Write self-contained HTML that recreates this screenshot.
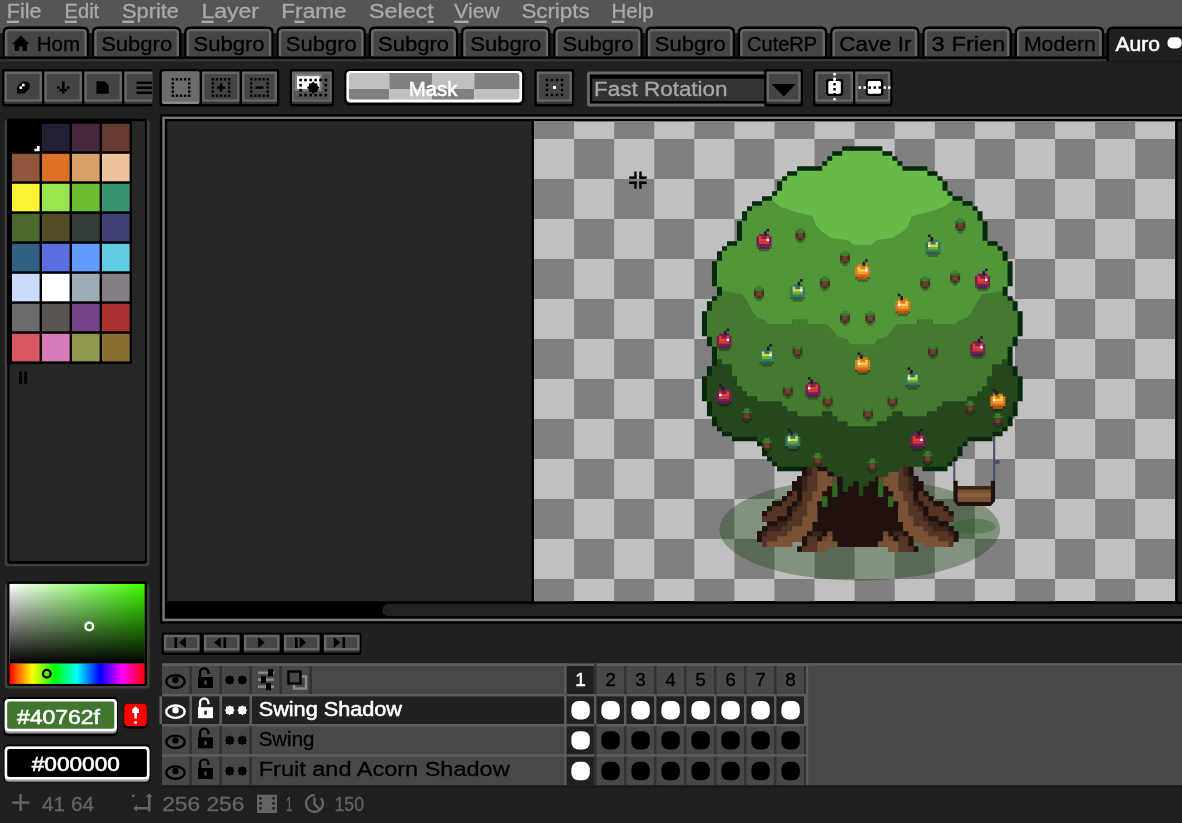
<!DOCTYPE html>
<html lang="en"><head><meta charset="utf-8"><title>Aseprite</title>
<style>
html,body{margin:0;padding:0;background:#202020;overflow:hidden;}
body{position:relative;width:1182px;height:823px;font-family:"Liberation Sans",sans-serif;}
svg{display:block;position:absolute;left:-4px;top:-4px;filter:blur(0.5px);}
svg text{font-family:"Liberation Sans",sans-serif;stroke-linejoin:round;}
</style></head><body>
<svg width="1190" height="831" viewBox="-4 -4 1190 831" font-family="'Liberation Sans', sans-serif">
<rect x="-4" y="-4" width="1190" height="831" fill="#202020"/>
<rect x="-4" y="-4" width="1190" height="37" fill="#555555"/>
<text x="6.8" y="18" font-size="19.5" fill="#aaaaaa" stroke="#aaaaaa" stroke-width="0.3" textLength="34.7" lengthAdjust="spacingAndGlyphs">File</text>
<rect x="7" y="20.6" width="12" height="2.4" fill="#aaaaaa"/>
<text x="64.5" y="18" font-size="19.5" fill="#aaaaaa" stroke="#aaaaaa" stroke-width="0.3" textLength="34.7" lengthAdjust="spacingAndGlyphs">Edit</text>
<rect x="64.8" y="20.6" width="12" height="2.4" fill="#aaaaaa"/>
<text x="122" y="18" font-size="19.5" fill="#aaaaaa" stroke="#aaaaaa" stroke-width="0.3" textLength="57" lengthAdjust="spacingAndGlyphs">Sprite</text>
<rect x="122.2" y="20.6" width="12" height="2.4" fill="#aaaaaa"/>
<text x="201.4" y="18" font-size="19.5" fill="#aaaaaa" stroke="#aaaaaa" stroke-width="0.3" textLength="57.6" lengthAdjust="spacingAndGlyphs">Layer</text>
<rect x="201.4" y="20.6" width="12.4" height="2.4" fill="#aaaaaa"/>
<text x="281.3" y="18" font-size="19.5" fill="#aaaaaa" stroke="#aaaaaa" stroke-width="0.3" textLength="65.3" lengthAdjust="spacingAndGlyphs">Frame</text>
<rect x="294.5" y="20.6" width="9.9" height="2.4" fill="#aaaaaa"/>
<text x="369" y="18" font-size="19.5" fill="#aaaaaa" stroke="#aaaaaa" stroke-width="0.3" textLength="64.7" lengthAdjust="spacingAndGlyphs">Select</text>
<rect x="427.6" y="20.6" width="6.1" height="2.4" fill="#aaaaaa"/>
<text x="454.3" y="18" font-size="19.5" fill="#aaaaaa" stroke="#aaaaaa" stroke-width="0.3" textLength="45.3" lengthAdjust="spacingAndGlyphs">View</text>
<rect x="454.3" y="20.6" width="14.3" height="2.4" fill="#aaaaaa"/>
<text x="521.4" y="18" font-size="19.5" fill="#aaaaaa" stroke="#aaaaaa" stroke-width="0.3" textLength="68.2" lengthAdjust="spacingAndGlyphs">Scripts</text>
<rect x="534.6" y="20.6" width="12.1" height="2.4" fill="#aaaaaa"/>
<text x="611.6" y="18" font-size="19.5" fill="#aaaaaa" stroke="#aaaaaa" stroke-width="0.3" textLength="42" lengthAdjust="spacingAndGlyphs">Help</text>
<rect x="611.6" y="20.6" width="12.7" height="2.4" fill="#aaaaaa"/>
<rect x="-4" y="33.5" width="1114" height="25.5" fill="#1a1a1a"/>
<path d="M2.5 58.8 L2.5 32.6 Q2.5 26.6 8.5 26.6 L83.1 26.6 Q89.1 26.6 89.1 32.6 L89.1 58.8 Z" fill="#000"/>
<path d="M4.8 56.5 L4.8 32.9 Q4.8 28.9 8.8 28.9 L82.8 28.9 Q86.8 28.9 86.8 32.9 L86.8 56.5 Z" fill="#686868"/>
<path d="M7.3 56.5 L7.3 33.7 Q7.3 31.2 9.8 31.2 L81.8 31.2 Q84.3 31.2 84.3 33.7 L84.3 56.5 Z" fill="#454545"/>
<polygon points="20.8,35.5 29.5,44 27,44 27,51 22.6,51 22.6,46.5 19,46.5 19,51 14.6,51 14.6,44 12.2,44" fill="#000"/>
<text x="36.8" y="51" font-size="20" fill="#000" stroke="#000" stroke-width="0.3" textLength="43.2" lengthAdjust="spacingAndGlyphs">Hom</text>
<path d="M91.9 58.8 L91.9 32.6 Q91.9 26.6 97.9 26.6 L175.4 26.6 Q181.4 26.6 181.4 32.6 L181.4 58.8 Z" fill="#000"/>
<path d="M94.2 56.5 L94.2 32.9 Q94.2 28.9 98.2 28.9 L175.1 28.9 Q179.1 28.9 179.1 32.9 L179.1 56.5 Z" fill="#686868"/>
<path d="M96.7 56.5 L96.7 33.7 Q96.7 31.2 99.2 31.2 L174.1 31.2 Q176.6 31.2 176.6 33.7 L176.6 56.5 Z" fill="#454545"/>
<text x="101.2" y="51" font-size="20" fill="#000" stroke="#000" stroke-width="0.3" textLength="71" lengthAdjust="spacingAndGlyphs">Subgro</text>
<path d="M184.17 58.8 L184.17 32.6 Q184.17 26.6 190.17 26.6 L267.67 26.6 Q273.67 26.6 273.67 32.6 L273.67 58.8 Z" fill="#000"/>
<path d="M186.47 56.5 L186.47 32.9 Q186.47 28.9 190.47 28.9 L267.37 28.9 Q271.37 28.9 271.37 32.9 L271.37 56.5 Z" fill="#686868"/>
<path d="M188.97 56.5 L188.97 33.7 Q188.97 31.2 191.47 31.2 L266.37 31.2 Q268.87 31.2 268.87 33.7 L268.87 56.5 Z" fill="#454545"/>
<text x="193.47" y="51" font-size="20" fill="#000" stroke="#000" stroke-width="0.3" textLength="71" lengthAdjust="spacingAndGlyphs">Subgro</text>
<path d="M276.44 58.8 L276.44 32.6 Q276.44 26.6 282.44 26.6 L359.94 26.6 Q365.94 26.6 365.94 32.6 L365.94 58.8 Z" fill="#000"/>
<path d="M278.74 56.5 L278.74 32.9 Q278.74 28.9 282.74 28.9 L359.64 28.9 Q363.64 28.9 363.64 32.9 L363.64 56.5 Z" fill="#686868"/>
<path d="M281.24 56.5 L281.24 33.7 Q281.24 31.2 283.74 31.2 L358.64 31.2 Q361.14 31.2 361.14 33.7 L361.14 56.5 Z" fill="#454545"/>
<text x="285.74" y="51" font-size="20" fill="#000" stroke="#000" stroke-width="0.3" textLength="71" lengthAdjust="spacingAndGlyphs">Subgro</text>
<path d="M368.71 58.8 L368.71 32.6 Q368.71 26.6 374.71 26.6 L452.21 26.6 Q458.21 26.6 458.21 32.6 L458.21 58.8 Z" fill="#000"/>
<path d="M371.01 56.5 L371.01 32.9 Q371.01 28.9 375.01 28.9 L451.91 28.9 Q455.91 28.9 455.91 32.9 L455.91 56.5 Z" fill="#686868"/>
<path d="M373.51 56.5 L373.51 33.7 Q373.51 31.2 376.01 31.2 L450.91 31.2 Q453.41 31.2 453.41 33.7 L453.41 56.5 Z" fill="#454545"/>
<text x="378.01" y="51" font-size="20" fill="#000" stroke="#000" stroke-width="0.3" textLength="71" lengthAdjust="spacingAndGlyphs">Subgro</text>
<path d="M460.98 58.8 L460.98 32.6 Q460.98 26.6 466.98 26.6 L544.48 26.6 Q550.48 26.6 550.48 32.6 L550.48 58.8 Z" fill="#000"/>
<path d="M463.28 56.5 L463.28 32.9 Q463.28 28.9 467.28 28.9 L544.18 28.9 Q548.18 28.9 548.18 32.9 L548.18 56.5 Z" fill="#686868"/>
<path d="M465.78 56.5 L465.78 33.7 Q465.78 31.2 468.28 31.2 L543.18 31.2 Q545.68 31.2 545.68 33.7 L545.68 56.5 Z" fill="#454545"/>
<text x="470.28" y="51" font-size="20" fill="#000" stroke="#000" stroke-width="0.3" textLength="71" lengthAdjust="spacingAndGlyphs">Subgro</text>
<path d="M553.25 58.8 L553.25 32.6 Q553.25 26.6 559.25 26.6 L636.75 26.6 Q642.75 26.6 642.75 32.6 L642.75 58.8 Z" fill="#000"/>
<path d="M555.55 56.5 L555.55 32.9 Q555.55 28.9 559.55 28.9 L636.45 28.9 Q640.45 28.9 640.45 32.9 L640.45 56.5 Z" fill="#686868"/>
<path d="M558.05 56.5 L558.05 33.7 Q558.05 31.2 560.55 31.2 L635.45 31.2 Q637.95 31.2 637.95 33.7 L637.95 56.5 Z" fill="#454545"/>
<text x="562.55" y="51" font-size="20" fill="#000" stroke="#000" stroke-width="0.3" textLength="71" lengthAdjust="spacingAndGlyphs">Subgro</text>
<path d="M645.52 58.8 L645.52 32.6 Q645.52 26.6 651.52 26.6 L729.02 26.6 Q735.02 26.6 735.02 32.6 L735.02 58.8 Z" fill="#000"/>
<path d="M647.82 56.5 L647.82 32.9 Q647.82 28.9 651.82 28.9 L728.72 28.9 Q732.72 28.9 732.72 32.9 L732.72 56.5 Z" fill="#686868"/>
<path d="M650.32 56.5 L650.32 33.7 Q650.32 31.2 652.82 31.2 L727.72 31.2 Q730.22 31.2 730.22 33.7 L730.22 56.5 Z" fill="#454545"/>
<text x="654.82" y="51" font-size="20" fill="#000" stroke="#000" stroke-width="0.3" textLength="71" lengthAdjust="spacingAndGlyphs">Subgro</text>
<path d="M737.79 58.8 L737.79 32.6 Q737.79 26.6 743.79 26.6 L821.29 26.6 Q827.29 26.6 827.29 32.6 L827.29 58.8 Z" fill="#000"/>
<path d="M740.09 56.5 L740.09 32.9 Q740.09 28.9 744.09 28.9 L820.99 28.9 Q824.99 28.9 824.99 32.9 L824.99 56.5 Z" fill="#686868"/>
<path d="M742.59 56.5 L742.59 33.7 Q742.59 31.2 745.09 31.2 L819.99 31.2 Q822.49 31.2 822.49 33.7 L822.49 56.5 Z" fill="#454545"/>
<text x="747.09" y="51" font-size="20" fill="#000" stroke="#000" stroke-width="0.3" textLength="70" lengthAdjust="spacingAndGlyphs">CuteRP</text>
<path d="M830.06 58.8 L830.06 32.6 Q830.06 26.6 836.06 26.6 L913.56 26.6 Q919.56 26.6 919.56 32.6 L919.56 58.8 Z" fill="#000"/>
<path d="M832.36 56.5 L832.36 32.9 Q832.36 28.9 836.36 28.9 L913.26 28.9 Q917.26 28.9 917.26 32.9 L917.26 56.5 Z" fill="#686868"/>
<path d="M834.86 56.5 L834.86 33.7 Q834.86 31.2 837.36 31.2 L912.26 31.2 Q914.76 31.2 914.76 33.7 L914.76 56.5 Z" fill="#454545"/>
<text x="839.36" y="51" font-size="20" fill="#000" stroke="#000" stroke-width="0.3" textLength="72" lengthAdjust="spacingAndGlyphs">Cave Ir</text>
<path d="M922.33 58.8 L922.33 32.6 Q922.33 26.6 928.33 26.6 L1005.83 26.6 Q1011.83 26.6 1011.83 32.6 L1011.83 58.8 Z" fill="#000"/>
<path d="M924.63 56.5 L924.63 32.9 Q924.63 28.9 928.63 28.9 L1005.53 28.9 Q1009.53 28.9 1009.53 32.9 L1009.53 56.5 Z" fill="#686868"/>
<path d="M927.13 56.5 L927.13 33.7 Q927.13 31.2 929.63 31.2 L1004.53 31.2 Q1007.03 31.2 1007.03 33.7 L1007.03 56.5 Z" fill="#454545"/>
<text x="931.63" y="51" font-size="20" fill="#000" stroke="#000" stroke-width="0.3" textLength="73.8" lengthAdjust="spacingAndGlyphs">3 Frien</text>
<path d="M1014.6 58.8 L1014.6 32.6 Q1014.6 26.6 1020.6 26.6 L1098.1 26.6 Q1104.1 26.6 1104.1 32.6 L1104.1 58.8 Z" fill="#000"/>
<path d="M1016.9 56.5 L1016.9 32.9 Q1016.9 28.9 1020.9 28.9 L1097.8 28.9 Q1101.8 28.9 1101.8 32.9 L1101.8 56.5 Z" fill="#686868"/>
<path d="M1019.4 56.5 L1019.4 33.7 Q1019.4 31.2 1021.9 31.2 L1096.8 31.2 Q1099.3 31.2 1099.3 33.7 L1099.3 56.5 Z" fill="#454545"/>
<text x="1023.9" y="51" font-size="20" fill="#000" stroke="#000" stroke-width="0.3" textLength="72" lengthAdjust="spacingAndGlyphs">Modern</text>
<rect x="-4" y="56.5" width="1111.5" height="2.5" fill="#000"/>
<rect x="-4" y="59" width="1111.5" height="2.4" fill="#343434"/>
<path d="M1106.6 61.5 L1106.6 33 Q1106.6 26.6 1113 26.6 L1190 26.6 L1190 61.5 Z" fill="#000"/>
<path d="M1109 61.5 L1109 33.5 Q1109 29 1114 29 L1190 29 L1190 61.5 Z" fill="#202020"/>
<text x="1115.5" y="51" font-size="20" fill="#fff" stroke="#fff" stroke-width="0.55" textLength="44.5" lengthAdjust="spacingAndGlyphs">Auro</text>
<rect x="1167.5" y="37.3" width="14.2" height="11.2" fill="#fff" rx="5"/>
<rect x="2.1" y="69.2" width="42.3" height="37.2" fill="#000" rx="2"/>
<rect x="4.5" y="71.6" width="37.5" height="32.4" fill="#343434"/>
<rect x="4.5" y="71.6" width="37.5" height="30.1" fill="#686868"/>
<rect x="6.9" y="74.1" width="32.7" height="25.3" fill="#454545"/>
<rect x="42" y="69.2" width="42.4" height="37.2" fill="#000" rx="2"/>
<rect x="44.4" y="71.6" width="37.6" height="32.4" fill="#343434"/>
<rect x="44.4" y="71.6" width="37.6" height="30.1" fill="#686868"/>
<rect x="46.8" y="74.1" width="32.8" height="25.3" fill="#454545"/>
<rect x="82" y="69.2" width="42.4" height="37.2" fill="#000" rx="2"/>
<rect x="84.4" y="71.6" width="37.6" height="32.4" fill="#343434"/>
<rect x="84.4" y="71.6" width="37.6" height="30.1" fill="#686868"/>
<rect x="86.8" y="74.1" width="32.8" height="25.3" fill="#454545"/>
<rect x="122" y="69.2" width="30.3" height="37.2" fill="#000" rx="2"/>
<rect x="124.4" y="71.6" width="27.9" height="32.4" fill="#343434"/>
<rect x="124.4" y="71.6" width="27.9" height="30.1" fill="#686868"/>
<rect x="126.8" y="74.1" width="25.5" height="25.3" fill="#454545"/>
<polygon points="22,81.5 27,81.5 29.6,84 29.6,88.5 24.5,93.5 17,93.5 17,87" fill="#000"/>
<rect x="19.5" y="86.3" width="2.6" height="2.6" fill="#fff"/>
<rect x="22" y="83.8" width="2.6" height="2.6" fill="#fff"/>
<rect x="62" y="81.5" width="2.6" height="12" fill="#000"/>
<rect x="59.5" y="88.8" width="7.6" height="2.5" fill="#000"/>
<rect x="57" y="86.3" width="2.5" height="2.5" fill="#000"/>
<rect x="67" y="86.3" width="2.5" height="2.5" fill="#000"/>
<polygon points="96.5,81.3 104.5,81.3 108.8,85.5 108.8,93.8 96.5,93.8" fill="#000"/>
<rect x="136.5" y="81.5" width="15.5" height="2.5" fill="#000"/>
<rect x="136.5" y="86.5" width="15.5" height="2.5" fill="#000"/>
<rect x="136.5" y="91.5" width="15.5" height="2.5" fill="#000"/>
<rect x="159.5" y="69.2" width="42.6" height="37.2" fill="#000" rx="2"/>
<rect x="161.9" y="71.6" width="37.8" height="32.4" fill="#8a8a8a" rx="2"/>
<rect x="161.9" y="71.6" width="37.8" height="30" fill="#6c6c6c" rx="2"/>
<rect x="199.7" y="69.2" width="42.4" height="37.2" fill="#000" rx="2"/>
<rect x="202.1" y="71.6" width="37.6" height="32.4" fill="#343434"/>
<rect x="202.1" y="71.6" width="37.6" height="30.1" fill="#686868"/>
<rect x="204.5" y="74.1" width="32.8" height="25.3" fill="#454545"/>
<rect x="239.7" y="69.2" width="39.6" height="37.2" fill="#000" rx="2"/>
<rect x="242.1" y="71.6" width="34.8" height="32.4" fill="#343434"/>
<rect x="242.1" y="71.6" width="34.8" height="30.1" fill="#686868"/>
<rect x="244.5" y="74.1" width="30" height="25.3" fill="#454545"/>
<rect x="171.6" y="78.1" width="2.4" height="2.4" fill="#000"/>
<rect x="171.6" y="82.2" width="2.4" height="2.4" fill="#000"/>
<rect x="171.6" y="86.3" width="2.4" height="2.4" fill="#000"/>
<rect x="171.6" y="90.4" width="2.4" height="2.4" fill="#000"/>
<rect x="171.6" y="94.5" width="2.4" height="2.4" fill="#000"/>
<rect x="175.7" y="78.1" width="2.4" height="2.4" fill="#000"/>
<rect x="175.7" y="94.5" width="2.4" height="2.4" fill="#000"/>
<rect x="179.8" y="78.1" width="2.4" height="2.4" fill="#000"/>
<rect x="179.8" y="94.5" width="2.4" height="2.4" fill="#000"/>
<rect x="183.9" y="78.1" width="2.4" height="2.4" fill="#000"/>
<rect x="183.9" y="94.5" width="2.4" height="2.4" fill="#000"/>
<rect x="188" y="78.1" width="2.4" height="2.4" fill="#000"/>
<rect x="188" y="82.2" width="2.4" height="2.4" fill="#000"/>
<rect x="188" y="86.3" width="2.4" height="2.4" fill="#000"/>
<rect x="188" y="90.4" width="2.4" height="2.4" fill="#000"/>
<rect x="188" y="94.5" width="2.4" height="2.4" fill="#000"/>
<rect x="211.6" y="78.1" width="2.4" height="2.4" fill="#000"/>
<rect x="211.6" y="82.2" width="2.4" height="2.4" fill="#000"/>
<rect x="211.6" y="86.3" width="2.4" height="2.4" fill="#000"/>
<rect x="211.6" y="90.4" width="2.4" height="2.4" fill="#000"/>
<rect x="211.6" y="94.5" width="2.4" height="2.4" fill="#000"/>
<rect x="215.7" y="78.1" width="2.4" height="2.4" fill="#000"/>
<rect x="215.7" y="94.5" width="2.4" height="2.4" fill="#000"/>
<rect x="219.8" y="78.1" width="2.4" height="2.4" fill="#000"/>
<rect x="219.8" y="94.5" width="2.4" height="2.4" fill="#000"/>
<rect x="223.9" y="78.1" width="2.4" height="2.4" fill="#000"/>
<rect x="223.9" y="94.5" width="2.4" height="2.4" fill="#000"/>
<rect x="228" y="78.1" width="2.4" height="2.4" fill="#000"/>
<rect x="228" y="82.2" width="2.4" height="2.4" fill="#000"/>
<rect x="228" y="86.3" width="2.4" height="2.4" fill="#000"/>
<rect x="228" y="90.4" width="2.4" height="2.4" fill="#000"/>
<rect x="228" y="94.5" width="2.4" height="2.4" fill="#000"/>
<rect x="217" y="86.3" width="8" height="2.5" fill="#000"/>
<rect x="219.8" y="83.5" width="2.5" height="8" fill="#000"/>
<rect x="250.1" y="78.1" width="2.4" height="2.4" fill="#000"/>
<rect x="250.1" y="82.2" width="2.4" height="2.4" fill="#000"/>
<rect x="250.1" y="86.3" width="2.4" height="2.4" fill="#000"/>
<rect x="250.1" y="90.4" width="2.4" height="2.4" fill="#000"/>
<rect x="250.1" y="94.5" width="2.4" height="2.4" fill="#000"/>
<rect x="254.2" y="78.1" width="2.4" height="2.4" fill="#000"/>
<rect x="254.2" y="94.5" width="2.4" height="2.4" fill="#000"/>
<rect x="258.3" y="78.1" width="2.4" height="2.4" fill="#000"/>
<rect x="258.3" y="94.5" width="2.4" height="2.4" fill="#000"/>
<rect x="262.4" y="78.1" width="2.4" height="2.4" fill="#000"/>
<rect x="262.4" y="94.5" width="2.4" height="2.4" fill="#000"/>
<rect x="266.5" y="78.1" width="2.4" height="2.4" fill="#000"/>
<rect x="266.5" y="82.2" width="2.4" height="2.4" fill="#000"/>
<rect x="266.5" y="86.3" width="2.4" height="2.4" fill="#000"/>
<rect x="266.5" y="90.4" width="2.4" height="2.4" fill="#000"/>
<rect x="266.5" y="94.5" width="2.4" height="2.4" fill="#000"/>
<rect x="255.5" y="86.3" width="8" height="2.5" fill="#000"/>
<rect x="289.6" y="69.2" width="44.5" height="37.2" fill="#000" rx="2"/>
<rect x="292" y="71.6" width="39.7" height="32.4" fill="#343434"/>
<rect x="292" y="71.6" width="39.7" height="30.1" fill="#686868"/>
<rect x="294.4" y="74.1" width="34.9" height="25.3" fill="#454545"/>
<rect x="294.6" y="74" width="27.6" height="17.3" fill="#7c7c7c"/>
<rect x="322.2" y="74" width="7.2" height="25.3" fill="#565656"/>
<rect x="294.6" y="91.3" width="27.6" height="8" fill="#565656"/>
<rect x="297" y="76.2" width="22.5" height="12.8" fill="#fff"/>
<rect x="299.3" y="78.7" width="2.6" height="2.6" fill="#000"/>
<rect x="299.3" y="93.8" width="2.6" height="2.6" fill="#000"/>
<rect x="304.2" y="78.7" width="2.6" height="2.6" fill="#000"/>
<rect x="304.2" y="93.8" width="2.6" height="2.6" fill="#000"/>
<rect x="309.4" y="78.7" width="2.6" height="2.6" fill="#000"/>
<rect x="309.4" y="93.8" width="2.6" height="2.6" fill="#000"/>
<rect x="314.3" y="78.7" width="2.6" height="2.6" fill="#000"/>
<rect x="314.3" y="93.8" width="2.6" height="2.6" fill="#000"/>
<rect x="319.3" y="78.7" width="2.6" height="2.6" fill="#000"/>
<rect x="319.3" y="93.8" width="2.6" height="2.6" fill="#000"/>
<rect x="324.5" y="78.7" width="2.6" height="2.6" fill="#000"/>
<rect x="324.5" y="93.8" width="2.6" height="2.6" fill="#000"/>
<rect x="299.3" y="83.9" width="2.6" height="2.6" fill="#000"/>
<rect x="324.5" y="83.9" width="2.6" height="2.6" fill="#000"/>
<rect x="299.3" y="88.9" width="2.6" height="2.6" fill="#000"/>
<rect x="324.5" y="88.9" width="2.6" height="2.6" fill="#000"/>
<polygon points="313.2,81.5 316,84.5 319.5,87.7 316,91 313.2,94 310.4,91 306.9,87.7 310.4,84.5" fill="#000"/>
<rect x="309" y="83.5" width="8.4" height="8.4" fill="#000"/>
<rect x="344.3" y="69" width="180.2" height="36.5" fill="#000" rx="5"/>
<rect x="346.4" y="71" width="175.7" height="31.4" fill="#fff" rx="4"/>
<clipPath id="mk"><rect x="349" y="73" width="170.4" height="26.6" rx="2.5"/></clipPath><g clip-path="url(#mk)">
<rect x="346" y="73" width="43.3" height="16" fill="#c0c0c0"/>
<rect x="346" y="89" width="43.3" height="11" fill="#808080"/>
<rect x="389.3" y="73" width="42.7" height="16" fill="#808080"/>
<rect x="389.3" y="89" width="42.7" height="11" fill="#c0c0c0"/>
<rect x="432" y="73" width="42.3" height="16" fill="#c0c0c0"/>
<rect x="432" y="89" width="42.3" height="11" fill="#808080"/>
<rect x="474.3" y="73" width="47.7" height="16" fill="#808080"/>
<rect x="474.3" y="89" width="47.7" height="11" fill="#c0c0c0"/>
</g>
<text x="408.7" y="95.8" font-size="20" fill="#fff" stroke="#fff" stroke-width="0.55" textLength="48.7" lengthAdjust="spacingAndGlyphs">Mask</text>
<rect x="534.4" y="69.2" width="39.8" height="37.2" fill="#000" rx="2"/>
<rect x="536.8" y="71.6" width="35" height="32.4" fill="#343434"/>
<rect x="536.8" y="71.6" width="35" height="30.1" fill="#686868"/>
<rect x="539.2" y="74.1" width="30.2" height="25.3" fill="#454545"/>
<rect x="545.8" y="78.8" width="2.4" height="2.4" fill="#000"/>
<rect x="545.8" y="83.8" width="2.4" height="2.4" fill="#000"/>
<rect x="545.8" y="88.8" width="2.4" height="2.4" fill="#000"/>
<rect x="545.8" y="93.8" width="2.4" height="2.4" fill="#000"/>
<rect x="550.8" y="78.8" width="2.4" height="2.4" fill="#000"/>
<rect x="550.8" y="93.8" width="2.4" height="2.4" fill="#000"/>
<rect x="555.8" y="78.8" width="2.4" height="2.4" fill="#000"/>
<rect x="555.8" y="93.8" width="2.4" height="2.4" fill="#000"/>
<rect x="560.8" y="78.8" width="2.4" height="2.4" fill="#000"/>
<rect x="560.8" y="83.8" width="2.4" height="2.4" fill="#000"/>
<rect x="560.8" y="88.8" width="2.4" height="2.4" fill="#000"/>
<rect x="560.8" y="93.8" width="2.4" height="2.4" fill="#000"/>
<rect x="553" y="86" width="3" height="3" fill="#fff"/>
<rect x="586.9" y="71.5" width="179.1" height="34.9" fill="#686868" rx="3"/>
<rect x="589.9" y="74.4" width="176.1" height="29.2" fill="#000"/>
<rect x="592.2" y="78.6" width="173.8" height="22.5" fill="#343434"/>
<text x="594" y="96" font-size="20" fill="#a8a8a8" stroke="#a8a8a8" stroke-width="0.3" textLength="133.6" lengthAdjust="spacingAndGlyphs">Fast Rotation</text>
<rect x="764.2" y="69.2" width="38.8" height="37.2" fill="#000" rx="2"/>
<rect x="766.6" y="71.6" width="34" height="32.4" fill="#343434"/>
<rect x="766.6" y="71.6" width="34" height="30.1" fill="#686868"/>
<rect x="769" y="74.1" width="29.2" height="25.3" fill="#454545"/>
<polygon points="771.6,83.9 795.9,83.9 783.8,96.5" fill="#000"/>
<rect x="813" y="69.2" width="42.4" height="37.2" fill="#000" rx="2"/>
<rect x="815.4" y="71.6" width="37.6" height="32.4" fill="#343434"/>
<rect x="815.4" y="71.6" width="37.6" height="30.1" fill="#686868"/>
<rect x="817.8" y="74.1" width="32.8" height="25.3" fill="#454545"/>
<rect x="853" y="69.2" width="39.6" height="37.2" fill="#000" rx="2"/>
<rect x="855.4" y="71.6" width="34.8" height="32.4" fill="#343434"/>
<rect x="855.4" y="71.6" width="34.8" height="30.1" fill="#686868"/>
<rect x="857.8" y="74.1" width="30" height="25.3" fill="#454545"/>
<rect x="826" y="79" width="17.2" height="17" fill="#000" rx="3"/>
<rect x="828.3" y="81" width="12.5" height="12.7" fill="#fff" rx="1.5"/>
<rect x="833.3" y="73" width="2.5" height="2.5" fill="#fff"/>
<rect x="833.3" y="78" width="2.5" height="2.5" fill="#fff"/>
<rect x="833.3" y="83" width="2.5" height="2.5" fill="#000"/>
<rect x="833.3" y="88" width="2.5" height="2.5" fill="#000"/>
<rect x="833.3" y="93" width="2.5" height="2.5" fill="#000"/>
<rect x="833.3" y="98" width="2.5" height="2.5" fill="#fff"/>
<rect x="833.3" y="77.6" width="2.5" height="3" fill="#fff"/>
<rect x="865.5" y="79" width="17.8" height="17" fill="#000" rx="3"/>
<rect x="867.8" y="81" width="13.2" height="12.7" fill="#fff" rx="1.5"/>
<rect x="858.5" y="86.3" width="2.5" height="2.5" fill="#fff"/>
<rect x="863.5" y="86.3" width="2.5" height="2.5" fill="#fff"/>
<rect x="868.5" y="86.3" width="2.5" height="2.5" fill="#000"/>
<rect x="873.5" y="86.3" width="2.5" height="2.5" fill="#000"/>
<rect x="878.5" y="86.3" width="2.5" height="2.5" fill="#000"/>
<rect x="883.5" y="86.3" width="2.5" height="2.5" fill="#fff"/>
<rect x="888" y="86.3" width="2.5" height="2.5" fill="#fff"/>
<rect x="4.7" y="120" width="144.9" height="446.3" fill="#3e3e3e" rx="3"/>
<rect x="7.3" y="118.8" width="139.6" height="445" fill="#000" rx="2"/>
<rect x="9.6" y="121.3" width="135.2" height="439.7" fill="#262626"/>
<rect x="7.3" y="118.8" width="124.7" height="245.2" fill="#000"/>
<rect x="42" y="123.8" width="27.6" height="27.5" fill="#222034"/>
<rect x="72" y="123.8" width="27.6" height="27.5" fill="#45283c"/>
<rect x="102" y="123.8" width="27.6" height="27.5" fill="#663931"/>
<rect x="12" y="153.8" width="27.6" height="27.5" fill="#8f563b"/>
<rect x="42" y="153.8" width="27.6" height="27.5" fill="#df7126"/>
<rect x="72" y="153.8" width="27.6" height="27.5" fill="#d9a066"/>
<rect x="102" y="153.8" width="27.6" height="27.5" fill="#eec39a"/>
<rect x="12" y="183.8" width="27.6" height="27.5" fill="#fbf236"/>
<rect x="42" y="183.8" width="27.6" height="27.5" fill="#99e550"/>
<rect x="72" y="183.8" width="27.6" height="27.5" fill="#6abe30"/>
<rect x="102" y="183.8" width="27.6" height="27.5" fill="#37946e"/>
<rect x="12" y="213.8" width="27.6" height="27.5" fill="#4b692f"/>
<rect x="42" y="213.8" width="27.6" height="27.5" fill="#524b24"/>
<rect x="72" y="213.8" width="27.6" height="27.5" fill="#323c39"/>
<rect x="102" y="213.8" width="27.6" height="27.5" fill="#3f3f74"/>
<rect x="12" y="243.8" width="27.6" height="27.5" fill="#306082"/>
<rect x="42" y="243.8" width="27.6" height="27.5" fill="#5b6ee1"/>
<rect x="72" y="243.8" width="27.6" height="27.5" fill="#639bff"/>
<rect x="102" y="243.8" width="27.6" height="27.5" fill="#5fcde4"/>
<rect x="12" y="273.8" width="27.6" height="27.5" fill="#cbdbfc"/>
<rect x="42" y="273.8" width="27.6" height="27.5" fill="#ffffff"/>
<rect x="72" y="273.8" width="27.6" height="27.5" fill="#9badb7"/>
<rect x="102" y="273.8" width="27.6" height="27.5" fill="#847e87"/>
<rect x="12" y="303.8" width="27.6" height="27.5" fill="#696a6a"/>
<rect x="42" y="303.8" width="27.6" height="27.5" fill="#595652"/>
<rect x="72" y="303.8" width="27.6" height="27.5" fill="#76428a"/>
<rect x="102" y="303.8" width="27.6" height="27.5" fill="#ac3232"/>
<rect x="12" y="333.8" width="27.6" height="27.5" fill="#d95763"/>
<rect x="42" y="333.8" width="27.6" height="27.5" fill="#d77bba"/>
<rect x="72" y="333.8" width="27.6" height="27.5" fill="#8f974a"/>
<rect x="102" y="333.8" width="27.6" height="27.5" fill="#8a6f30"/>
<polygon points="37,146 39.6,146 39.6,151.3 34.4,151.3 34.4,148.7 37,148.7" fill="#fff"/>
<rect x="19" y="371.4" width="3" height="12.3" fill="#000"/>
<rect x="24.2" y="371.4" width="3" height="12.3" fill="#000"/>
<rect x="4.7" y="584" width="144.9" height="104.5" fill="#3e3e3e" rx="3"/>
<rect x="7.3" y="581.4" width="139.6" height="104.6" fill="#000" rx="2"/>
<defs><linearGradient id="gs" x1="0" x2="1" y1="0" y2="0"><stop offset="0" stop-color="#fff"/><stop offset="1" stop-color="#3dff00"/></linearGradient><linearGradient id="gv" x1="0" x2="0" y1="0" y2="1"><stop offset="0" stop-color="#000" stop-opacity="0"/><stop offset="1" stop-color="#000"/></linearGradient><linearGradient id="gh" x1="0" x2="1" y1="0" y2="0"><stop offset="0" stop-color="#f00"/><stop offset="0.1667" stop-color="#ff0"/><stop offset="0.3333" stop-color="#0f0"/><stop offset="0.5" stop-color="#0ff"/><stop offset="0.6667" stop-color="#00f"/><stop offset="0.8333" stop-color="#f0f"/><stop offset="1" stop-color="#f00"/></linearGradient></defs>
<rect x="9.5" y="583.9" width="135.3" height="79.8" fill="url(#gs)"/>
<rect x="9.5" y="583.9" width="135.3" height="79.8" fill="url(#gv)"/>
<rect x="9.5" y="663.6" width="135.3" height="20.3" fill="url(#gh)"/>
<rect x="144.8" y="583.9" width="2.1" height="100.1" fill="#000"/>
<circle cx="89.3" cy="626.4" r="3.8" fill="none" stroke="#fff" stroke-width="2.4"/>
<circle cx="46.8" cy="673.7" r="3.8" fill="none" stroke="#000" stroke-width="2.4"/>
<rect x="3.6" y="697" width="114.4" height="39.3" fill="#000" rx="4"/>
<rect x="4.7" y="699" width="112.1" height="34.6" fill="#9a9a9a" rx="4"/>
<rect x="4.7" y="699" width="112.1" height="32.2" fill="#fff" rx="4"/>
<rect x="7.2" y="701.5" width="107.1" height="27.2" fill="#40762f" rx="2.5"/>
<text x="17" y="723.8" font-size="20" fill="#fff" stroke="#fff" stroke-width="0.55" textLength="83" lengthAdjust="spacingAndGlyphs">#40762f</text>
<rect x="123.8" y="703.7" width="23.4" height="24.9" fill="#000" rx="4"/>
<rect x="124.2" y="703.7" width="22.6" height="22.6" fill="#ff0000" rx="4"/>
<polygon points="135.6,706.3 139,709.6 139,713 136.9,713 136.9,718.6 134.3,718.6 134.3,713 132.2,713 132.2,709.6" fill="#fff"/>
<rect x="134.3" y="721.2" width="2.6" height="2.6" fill="#fff"/>
<rect x="3.6" y="744.5" width="146.8" height="37.9" fill="#000" rx="4"/>
<rect x="4.7" y="746.4" width="144.7" height="35.3" fill="#9a9a9a" rx="4"/>
<rect x="4.7" y="746.4" width="144.7" height="33" fill="#fff" rx="4"/>
<rect x="7.2" y="748.9" width="139.7" height="28" fill="#000" rx="2.5"/>
<text x="31.8" y="771.2" font-size="20" fill="#fff" stroke="#fff" stroke-width="0.55" textLength="88" lengthAdjust="spacingAndGlyphs">#000000</text>
<rect x="19.3" y="794" width="2.5" height="17" fill="#646464"/>
<rect x="12.2" y="801.3" width="17" height="2.5" fill="#646464"/>
<text x="42" y="811" font-size="20" fill="#646464" stroke="#646464" stroke-width="0.3" textLength="52" lengthAdjust="spacingAndGlyphs">41 64</text>
<rect x="148" y="794.5" width="2.5" height="17" fill="#646464"/>
<rect x="134.5" y="807" width="16" height="2.5" fill="#646464"/>
<polygon points="145.5,797 149.2,793.5 153,797" fill="#646464"/>
<polygon points="137,805 133.3,808.3 137,811.8" fill="#646464"/>
<rect x="132" y="794.5" width="2.5" height="2.5" fill="#646464"/>
<text x="162.2" y="811" font-size="20" fill="#646464" stroke="#646464" stroke-width="0.3" textLength="82.2" lengthAdjust="spacingAndGlyphs">256 256</text>
<rect x="257" y="794.7" width="20" height="18.3" fill="#646464"/>
<rect x="259.3" y="797" width="2.4" height="2.6" fill="#202020"/>
<rect x="272.3" y="797" width="2.4" height="2.6" fill="#202020"/>
<rect x="259.3" y="802" width="2.4" height="2.6" fill="#202020"/>
<rect x="272.3" y="802" width="2.4" height="2.6" fill="#202020"/>
<rect x="259.3" y="807" width="2.4" height="2.6" fill="#202020"/>
<rect x="272.3" y="807" width="2.4" height="2.6" fill="#202020"/>
<text x="286" y="811" font-size="20" fill="#646464" stroke="#646464" stroke-width="0.3" textLength="6.5" lengthAdjust="spacingAndGlyphs">1</text>
<circle cx="314.5" cy="803.5" r="8.5" fill="none" stroke="#646464" stroke-width="2.4" stroke-dasharray="40 7"/>
<path d="M314.5 797.5 V804 L320 810" fill="none" stroke="#646464" stroke-width="2.4"/>
<text x="334.5" y="811" font-size="20" fill="#646464" stroke="#646464" stroke-width="0.3" textLength="29.5" lengthAdjust="spacingAndGlyphs">150</text>
<rect x="159.9" y="114.2" width="1030.1" height="509.4" fill="#000"/>
<rect x="162.3" y="116.6" width="1027.7" height="504.6" fill="#787878"/>
<rect x="164.8" y="119" width="1025.2" height="499.6" fill="#000"/>
<rect x="167.2" y="121.3" width="1022.8" height="479.9" fill="#262626"/>
<rect x="382.5" y="604" width="817.5" height="12.3" fill="#222222" rx="6"/>
<rect x="1177.7" y="121.3" width="12.3" height="479.9" fill="#262626"/>
<rect x="531.6" y="121.2" width="646.1" height="482.4" fill="#000"/>
<clipPath id="cv"><rect x="534" y="121.2" width="641.3" height="480"/></clipPath>
<g clip-path="url(#cv)">
<rect x="534" y="121.2" width="641.3" height="480" fill="#c0c0c0"/>
<rect x="534" y="99" width="40.08" height="40" fill="#808080"/>
<rect x="614.16" y="99" width="40.08" height="40" fill="#808080"/>
<rect x="694.33" y="99" width="40.08" height="40" fill="#808080"/>
<rect x="774.49" y="99" width="40.08" height="40" fill="#808080"/>
<rect x="854.65" y="99" width="40.08" height="40" fill="#808080"/>
<rect x="934.81" y="99" width="40.08" height="40" fill="#808080"/>
<rect x="1014.97" y="99" width="40.08" height="40" fill="#808080"/>
<rect x="1095.14" y="99" width="40.08" height="40" fill="#808080"/>
<rect x="574.08" y="139" width="40.08" height="40" fill="#808080"/>
<rect x="654.24" y="139" width="40.08" height="40" fill="#808080"/>
<rect x="734.41" y="139" width="40.08" height="40" fill="#808080"/>
<rect x="814.57" y="139" width="40.08" height="40" fill="#808080"/>
<rect x="894.73" y="139" width="40.08" height="40" fill="#808080"/>
<rect x="974.89" y="139" width="40.08" height="40" fill="#808080"/>
<rect x="1055.06" y="139" width="40.08" height="40" fill="#808080"/>
<rect x="1135.22" y="139" width="40.08" height="40" fill="#808080"/>
<rect x="534" y="179" width="40.08" height="40" fill="#808080"/>
<rect x="614.16" y="179" width="40.08" height="40" fill="#808080"/>
<rect x="694.33" y="179" width="40.08" height="40" fill="#808080"/>
<rect x="774.49" y="179" width="40.08" height="40" fill="#808080"/>
<rect x="854.65" y="179" width="40.08" height="40" fill="#808080"/>
<rect x="934.81" y="179" width="40.08" height="40" fill="#808080"/>
<rect x="1014.97" y="179" width="40.08" height="40" fill="#808080"/>
<rect x="1095.14" y="179" width="40.08" height="40" fill="#808080"/>
<rect x="574.08" y="219" width="40.08" height="40" fill="#808080"/>
<rect x="654.24" y="219" width="40.08" height="40" fill="#808080"/>
<rect x="734.41" y="219" width="40.08" height="40" fill="#808080"/>
<rect x="814.57" y="219" width="40.08" height="40" fill="#808080"/>
<rect x="894.73" y="219" width="40.08" height="40" fill="#808080"/>
<rect x="974.89" y="219" width="40.08" height="40" fill="#808080"/>
<rect x="1055.06" y="219" width="40.08" height="40" fill="#808080"/>
<rect x="1135.22" y="219" width="40.08" height="40" fill="#808080"/>
<rect x="534" y="259" width="40.08" height="40" fill="#808080"/>
<rect x="614.16" y="259" width="40.08" height="40" fill="#808080"/>
<rect x="694.33" y="259" width="40.08" height="40" fill="#808080"/>
<rect x="774.49" y="259" width="40.08" height="40" fill="#808080"/>
<rect x="854.65" y="259" width="40.08" height="40" fill="#808080"/>
<rect x="934.81" y="259" width="40.08" height="40" fill="#808080"/>
<rect x="1014.97" y="259" width="40.08" height="40" fill="#808080"/>
<rect x="1095.14" y="259" width="40.08" height="40" fill="#808080"/>
<rect x="574.08" y="299" width="40.08" height="40" fill="#808080"/>
<rect x="654.24" y="299" width="40.08" height="40" fill="#808080"/>
<rect x="734.41" y="299" width="40.08" height="40" fill="#808080"/>
<rect x="814.57" y="299" width="40.08" height="40" fill="#808080"/>
<rect x="894.73" y="299" width="40.08" height="40" fill="#808080"/>
<rect x="974.89" y="299" width="40.08" height="40" fill="#808080"/>
<rect x="1055.06" y="299" width="40.08" height="40" fill="#808080"/>
<rect x="1135.22" y="299" width="40.08" height="40" fill="#808080"/>
<rect x="534" y="339" width="40.08" height="40" fill="#808080"/>
<rect x="614.16" y="339" width="40.08" height="40" fill="#808080"/>
<rect x="694.33" y="339" width="40.08" height="40" fill="#808080"/>
<rect x="774.49" y="339" width="40.08" height="40" fill="#808080"/>
<rect x="854.65" y="339" width="40.08" height="40" fill="#808080"/>
<rect x="934.81" y="339" width="40.08" height="40" fill="#808080"/>
<rect x="1014.97" y="339" width="40.08" height="40" fill="#808080"/>
<rect x="1095.14" y="339" width="40.08" height="40" fill="#808080"/>
<rect x="574.08" y="379" width="40.08" height="40" fill="#808080"/>
<rect x="654.24" y="379" width="40.08" height="40" fill="#808080"/>
<rect x="734.41" y="379" width="40.08" height="40" fill="#808080"/>
<rect x="814.57" y="379" width="40.08" height="40" fill="#808080"/>
<rect x="894.73" y="379" width="40.08" height="40" fill="#808080"/>
<rect x="974.89" y="379" width="40.08" height="40" fill="#808080"/>
<rect x="1055.06" y="379" width="40.08" height="40" fill="#808080"/>
<rect x="1135.22" y="379" width="40.08" height="40" fill="#808080"/>
<rect x="534" y="419" width="40.08" height="40" fill="#808080"/>
<rect x="614.16" y="419" width="40.08" height="40" fill="#808080"/>
<rect x="694.33" y="419" width="40.08" height="40" fill="#808080"/>
<rect x="774.49" y="419" width="40.08" height="40" fill="#808080"/>
<rect x="854.65" y="419" width="40.08" height="40" fill="#808080"/>
<rect x="934.81" y="419" width="40.08" height="40" fill="#808080"/>
<rect x="1014.97" y="419" width="40.08" height="40" fill="#808080"/>
<rect x="1095.14" y="419" width="40.08" height="40" fill="#808080"/>
<rect x="574.08" y="459" width="40.08" height="40" fill="#808080"/>
<rect x="654.24" y="459" width="40.08" height="40" fill="#808080"/>
<rect x="734.41" y="459" width="40.08" height="40" fill="#808080"/>
<rect x="814.57" y="459" width="40.08" height="40" fill="#808080"/>
<rect x="894.73" y="459" width="40.08" height="40" fill="#808080"/>
<rect x="974.89" y="459" width="40.08" height="40" fill="#808080"/>
<rect x="1055.06" y="459" width="40.08" height="40" fill="#808080"/>
<rect x="1135.22" y="459" width="40.08" height="40" fill="#808080"/>
<rect x="534" y="499" width="40.08" height="40" fill="#808080"/>
<rect x="614.16" y="499" width="40.08" height="40" fill="#808080"/>
<rect x="694.33" y="499" width="40.08" height="40" fill="#808080"/>
<rect x="774.49" y="499" width="40.08" height="40" fill="#808080"/>
<rect x="854.65" y="499" width="40.08" height="40" fill="#808080"/>
<rect x="934.81" y="499" width="40.08" height="40" fill="#808080"/>
<rect x="1014.97" y="499" width="40.08" height="40" fill="#808080"/>
<rect x="1095.14" y="499" width="40.08" height="40" fill="#808080"/>
<rect x="574.08" y="539" width="40.08" height="40" fill="#808080"/>
<rect x="654.24" y="539" width="40.08" height="40" fill="#808080"/>
<rect x="734.41" y="539" width="40.08" height="40" fill="#808080"/>
<rect x="814.57" y="539" width="40.08" height="40" fill="#808080"/>
<rect x="894.73" y="539" width="40.08" height="40" fill="#808080"/>
<rect x="974.89" y="539" width="40.08" height="40" fill="#808080"/>
<rect x="1055.06" y="539" width="40.08" height="40" fill="#808080"/>
<rect x="1135.22" y="539" width="40.08" height="40" fill="#808080"/>
<rect x="534" y="579" width="40.08" height="40" fill="#808080"/>
<rect x="614.16" y="579" width="40.08" height="40" fill="#808080"/>
<rect x="694.33" y="579" width="40.08" height="40" fill="#808080"/>
<rect x="774.49" y="579" width="40.08" height="40" fill="#808080"/>
<rect x="854.65" y="579" width="40.08" height="40" fill="#808080"/>
<rect x="934.81" y="579" width="40.08" height="40" fill="#808080"/>
<rect x="1014.97" y="579" width="40.08" height="40" fill="#808080"/>
<rect x="1095.14" y="579" width="40.08" height="40" fill="#808080"/>
<ellipse cx="859.7" cy="529.5" rx="140.4" ry="51" fill="rgb(22,61,11)" fill-opacity="0.36"/>
<ellipse cx="974.2" cy="526.2" rx="21.3" ry="7.5" fill="rgb(38,102,30)" fill-opacity="0.4"/>
<rect x="953.3" y="455" width="2" height="28" fill="#4a4f70"/>
<rect x="993.1" y="430" width="2.1" height="53" fill="#4a4f70"/>
<rect x="995.2" y="460" width="4.3" height="4" fill="#4a4f70"/>
<rect x="802.13" y="466.25" width="111.22" height="5.7" fill="#21110e"/>
<rect x="802.13" y="471.25" width="111.22" height="5.7" fill="#21110e"/>
<rect x="797.12" y="476.25" width="121.24" height="5.7" fill="#21110e"/>
<rect x="792.11" y="481.25" width="131.26" height="5.7" fill="#21110e"/>
<rect x="792.11" y="486.25" width="131.26" height="5.7" fill="#21110e"/>
<rect x="787.1" y="491.25" width="141.28" height="5.7" fill="#21110e"/>
<rect x="782.09" y="496.25" width="151.3" height="5.7" fill="#21110e"/>
<rect x="772.07" y="501.25" width="171.34" height="5.7" fill="#21110e"/>
<rect x="767.06" y="506.25" width="181.36" height="5.7" fill="#21110e"/>
<rect x="762.05" y="511.25" width="191.38" height="5.7" fill="#21110e"/>
<rect x="762.05" y="516.25" width="191.38" height="5.7" fill="#21110e"/>
<rect x="767.06" y="521.25" width="181.36" height="5.7" fill="#21110e"/>
<rect x="762.05" y="526.25" width="191.38" height="5.7" fill="#21110e"/>
<rect x="757.04" y="531.25" width="201.4" height="5.7" fill="#21110e"/>
<rect x="757.04" y="536.25" width="201.4" height="5.7" fill="#21110e"/>
<rect x="802.13" y="541.25" width="111.22" height="5.7" fill="#21110e"/>
<rect x="802.13" y="466.25" width="5.31" height="5.7" fill="#21110e"/>
<rect x="908.04" y="466.25" width="5.31" height="5.7" fill="#21110e"/>
<rect x="807.14" y="466.25" width="5.31" height="5.7" fill="#3a251c"/>
<rect x="903.03" y="466.25" width="5.31" height="5.7" fill="#3a251c"/>
<rect x="812.15" y="466.25" width="5.31" height="5.7" fill="#553626"/>
<rect x="898.02" y="466.25" width="5.31" height="5.7" fill="#553626"/>
<rect x="802.13" y="471.25" width="5.31" height="5.7" fill="#21110e"/>
<rect x="908.04" y="471.25" width="5.31" height="5.7" fill="#21110e"/>
<rect x="807.14" y="471.25" width="5.31" height="5.7" fill="#3a251c"/>
<rect x="903.03" y="471.25" width="5.31" height="5.7" fill="#3a251c"/>
<rect x="812.15" y="471.25" width="5.31" height="5.7" fill="#553626"/>
<rect x="898.02" y="471.25" width="5.31" height="5.7" fill="#553626"/>
<rect x="817.16" y="471.25" width="10.32" height="5.7" fill="#7a5236"/>
<rect x="888" y="471.25" width="10.32" height="5.7" fill="#7a5236"/>
<rect x="797.12" y="476.25" width="5.31" height="5.7" fill="#21110e"/>
<rect x="913.05" y="476.25" width="5.31" height="5.7" fill="#21110e"/>
<rect x="802.13" y="476.25" width="5.31" height="5.7" fill="#3a251c"/>
<rect x="908.04" y="476.25" width="5.31" height="5.7" fill="#3a251c"/>
<rect x="807.14" y="476.25" width="10.32" height="5.7" fill="#553626"/>
<rect x="898.02" y="476.25" width="10.32" height="5.7" fill="#553626"/>
<rect x="817.16" y="476.25" width="15.33" height="5.7" fill="#7a5236"/>
<rect x="882.99" y="476.25" width="15.33" height="5.7" fill="#7a5236"/>
<rect x="832.19" y="476.25" width="5.31" height="5.7" fill="#6b4530"/>
<rect x="877.98" y="476.25" width="5.31" height="5.7" fill="#6b4530"/>
<rect x="837.2" y="476.25" width="5.31" height="5.7" fill="#21110e"/>
<rect x="872.97" y="476.25" width="5.31" height="5.7" fill="#21110e"/>
<rect x="792.11" y="481.25" width="10.32" height="5.7" fill="#21110e"/>
<rect x="913.05" y="481.25" width="10.32" height="5.7" fill="#21110e"/>
<rect x="802.13" y="481.25" width="5.31" height="5.7" fill="#3a251c"/>
<rect x="908.04" y="481.25" width="5.31" height="5.7" fill="#3a251c"/>
<rect x="807.14" y="481.25" width="10.32" height="5.7" fill="#553626"/>
<rect x="898.02" y="481.25" width="10.32" height="5.7" fill="#553626"/>
<rect x="817.16" y="481.25" width="15.33" height="5.7" fill="#7a5236"/>
<rect x="882.99" y="481.25" width="15.33" height="5.7" fill="#7a5236"/>
<rect x="832.19" y="481.25" width="5.31" height="5.7" fill="#2f6a24"/>
<rect x="877.98" y="481.25" width="5.31" height="5.7" fill="#2f6a24"/>
<rect x="837.2" y="481.25" width="5.31" height="5.7" fill="#21110e"/>
<rect x="872.97" y="481.25" width="5.31" height="5.7" fill="#21110e"/>
<rect x="792.11" y="486.25" width="10.32" height="5.7" fill="#21110e"/>
<rect x="913.05" y="486.25" width="10.32" height="5.7" fill="#21110e"/>
<rect x="802.13" y="486.25" width="5.31" height="5.7" fill="#3a251c"/>
<rect x="908.04" y="486.25" width="5.31" height="5.7" fill="#3a251c"/>
<rect x="807.14" y="486.25" width="10.32" height="5.7" fill="#553626"/>
<rect x="898.02" y="486.25" width="10.32" height="5.7" fill="#553626"/>
<rect x="817.16" y="486.25" width="10.32" height="5.7" fill="#7a5236"/>
<rect x="888" y="486.25" width="10.32" height="5.7" fill="#7a5236"/>
<rect x="827.18" y="486.25" width="5.31" height="5.7" fill="#21110e"/>
<rect x="882.99" y="486.25" width="5.31" height="5.7" fill="#21110e"/>
<rect x="832.19" y="486.25" width="5.31" height="5.7" fill="#2f6a24"/>
<rect x="877.98" y="486.25" width="5.31" height="5.7" fill="#2f6a24"/>
<rect x="787.1" y="491.25" width="5.31" height="5.7" fill="#21110e"/>
<rect x="923.07" y="491.25" width="5.31" height="5.7" fill="#21110e"/>
<rect x="792.11" y="491.25" width="5.31" height="5.7" fill="#553626"/>
<rect x="918.06" y="491.25" width="5.31" height="5.7" fill="#553626"/>
<rect x="797.12" y="491.25" width="5.31" height="5.7" fill="#21110e"/>
<rect x="913.05" y="491.25" width="5.31" height="5.7" fill="#21110e"/>
<rect x="802.13" y="491.25" width="10.32" height="5.7" fill="#553626"/>
<rect x="903.03" y="491.25" width="10.32" height="5.7" fill="#553626"/>
<rect x="812.15" y="491.25" width="10.32" height="5.7" fill="#7a5236"/>
<rect x="893.01" y="491.25" width="10.32" height="5.7" fill="#7a5236"/>
<rect x="822.17" y="491.25" width="10.32" height="5.7" fill="#21110e"/>
<rect x="882.99" y="491.25" width="10.32" height="5.7" fill="#21110e"/>
<rect x="832.19" y="491.25" width="5.31" height="5.7" fill="#2f6a24"/>
<rect x="877.98" y="491.25" width="5.31" height="5.7" fill="#2f6a24"/>
<rect x="782.09" y="496.25" width="5.31" height="5.7" fill="#21110e"/>
<rect x="928.08" y="496.25" width="5.31" height="5.7" fill="#21110e"/>
<rect x="787.1" y="496.25" width="10.32" height="5.7" fill="#553626"/>
<rect x="918.06" y="496.25" width="10.32" height="5.7" fill="#553626"/>
<rect x="797.12" y="496.25" width="5.31" height="5.7" fill="#21110e"/>
<rect x="913.05" y="496.25" width="5.31" height="5.7" fill="#21110e"/>
<rect x="802.13" y="496.25" width="10.32" height="5.7" fill="#553626"/>
<rect x="903.03" y="496.25" width="10.32" height="5.7" fill="#553626"/>
<rect x="812.15" y="496.25" width="10.32" height="5.7" fill="#7a5236"/>
<rect x="893.01" y="496.25" width="10.32" height="5.7" fill="#7a5236"/>
<rect x="822.17" y="496.25" width="5.31" height="5.7" fill="#2f6a24"/>
<rect x="888" y="496.25" width="5.31" height="5.7" fill="#2f6a24"/>
<rect x="772.07" y="501.25" width="10.32" height="5.7" fill="#21110e"/>
<rect x="933.09" y="501.25" width="10.32" height="5.7" fill="#21110e"/>
<rect x="782.09" y="501.25" width="10.32" height="5.7" fill="#553626"/>
<rect x="923.07" y="501.25" width="10.32" height="5.7" fill="#553626"/>
<rect x="792.11" y="501.25" width="5.31" height="5.7" fill="#21110e"/>
<rect x="918.06" y="501.25" width="5.31" height="5.7" fill="#21110e"/>
<rect x="797.12" y="501.25" width="5.31" height="5.7" fill="#3a251c"/>
<rect x="913.05" y="501.25" width="5.31" height="5.7" fill="#3a251c"/>
<rect x="802.13" y="501.25" width="5.31" height="5.7" fill="#553626"/>
<rect x="908.04" y="501.25" width="5.31" height="5.7" fill="#553626"/>
<rect x="807.14" y="501.25" width="10.32" height="5.7" fill="#7a5236"/>
<rect x="898.02" y="501.25" width="10.32" height="5.7" fill="#7a5236"/>
<rect x="817.16" y="501.25" width="5.31" height="5.7" fill="#21110e"/>
<rect x="893.01" y="501.25" width="5.31" height="5.7" fill="#21110e"/>
<rect x="822.17" y="501.25" width="5.31" height="5.7" fill="#2f6a24"/>
<rect x="888" y="501.25" width="5.31" height="5.7" fill="#2f6a24"/>
<rect x="767.06" y="506.25" width="5.31" height="5.7" fill="#21110e"/>
<rect x="943.11" y="506.25" width="5.31" height="5.7" fill="#21110e"/>
<rect x="772.07" y="506.25" width="15.33" height="5.7" fill="#553626"/>
<rect x="928.08" y="506.25" width="15.33" height="5.7" fill="#553626"/>
<rect x="787.1" y="506.25" width="5.31" height="5.7" fill="#21110e"/>
<rect x="923.07" y="506.25" width="5.31" height="5.7" fill="#21110e"/>
<rect x="792.11" y="506.25" width="5.31" height="5.7" fill="#3a251c"/>
<rect x="918.06" y="506.25" width="5.31" height="5.7" fill="#3a251c"/>
<rect x="797.12" y="506.25" width="10.32" height="5.7" fill="#553626"/>
<rect x="908.04" y="506.25" width="10.32" height="5.7" fill="#553626"/>
<rect x="807.14" y="506.25" width="10.32" height="5.7" fill="#7a5236"/>
<rect x="898.02" y="506.25" width="10.32" height="5.7" fill="#7a5236"/>
<rect x="762.05" y="511.25" width="5.31" height="5.7" fill="#21110e"/>
<rect x="948.12" y="511.25" width="5.31" height="5.7" fill="#21110e"/>
<rect x="767.06" y="511.25" width="20.34" height="5.7" fill="#553626"/>
<rect x="928.08" y="511.25" width="20.34" height="5.7" fill="#553626"/>
<rect x="787.1" y="511.25" width="5.31" height="5.7" fill="#21110e"/>
<rect x="923.07" y="511.25" width="5.31" height="5.7" fill="#21110e"/>
<rect x="792.11" y="511.25" width="15.33" height="5.7" fill="#553626"/>
<rect x="908.04" y="511.25" width="15.33" height="5.7" fill="#553626"/>
<rect x="807.14" y="511.25" width="10.32" height="5.7" fill="#7a5236"/>
<rect x="898.02" y="511.25" width="10.32" height="5.7" fill="#7a5236"/>
<rect x="762.05" y="516.25" width="15.33" height="5.7" fill="#553626"/>
<rect x="938.1" y="516.25" width="15.33" height="5.7" fill="#553626"/>
<rect x="777.08" y="516.25" width="10.32" height="5.7" fill="#21110e"/>
<rect x="928.08" y="516.25" width="10.32" height="5.7" fill="#21110e"/>
<rect x="787.1" y="516.25" width="5.31" height="5.7" fill="#3a251c"/>
<rect x="923.07" y="516.25" width="5.31" height="5.7" fill="#3a251c"/>
<rect x="792.11" y="516.25" width="10.32" height="5.7" fill="#553626"/>
<rect x="913.05" y="516.25" width="10.32" height="5.7" fill="#553626"/>
<rect x="802.13" y="516.25" width="15.33" height="5.7" fill="#7a5236"/>
<rect x="898.02" y="516.25" width="15.33" height="5.7" fill="#7a5236"/>
<rect x="767.06" y="521.25" width="10.32" height="5.7" fill="#21110e"/>
<rect x="938.1" y="521.25" width="10.32" height="5.7" fill="#21110e"/>
<rect x="777.08" y="521.25" width="10.32" height="5.7" fill="#3a251c"/>
<rect x="928.08" y="521.25" width="10.32" height="5.7" fill="#3a251c"/>
<rect x="787.1" y="521.25" width="15.33" height="5.7" fill="#553626"/>
<rect x="913.05" y="521.25" width="15.33" height="5.7" fill="#553626"/>
<rect x="802.13" y="521.25" width="10.32" height="5.7" fill="#7a5236"/>
<rect x="903.03" y="521.25" width="10.32" height="5.7" fill="#7a5236"/>
<rect x="762.05" y="526.25" width="5.31" height="5.7" fill="#21110e"/>
<rect x="948.12" y="526.25" width="5.31" height="5.7" fill="#21110e"/>
<rect x="767.06" y="526.25" width="15.33" height="5.7" fill="#3a251c"/>
<rect x="933.09" y="526.25" width="15.33" height="5.7" fill="#3a251c"/>
<rect x="782.09" y="526.25" width="10.32" height="5.7" fill="#553626"/>
<rect x="923.07" y="526.25" width="10.32" height="5.7" fill="#553626"/>
<rect x="792.11" y="526.25" width="20.34" height="5.7" fill="#7a5236"/>
<rect x="903.03" y="526.25" width="20.34" height="5.7" fill="#7a5236"/>
<rect x="757.04" y="531.25" width="5.31" height="5.7" fill="#21110e"/>
<rect x="953.13" y="531.25" width="5.31" height="5.7" fill="#21110e"/>
<rect x="762.05" y="531.25" width="5.31" height="5.7" fill="#3a251c"/>
<rect x="948.12" y="531.25" width="5.31" height="5.7" fill="#3a251c"/>
<rect x="767.06" y="531.25" width="20.34" height="5.7" fill="#553626"/>
<rect x="928.08" y="531.25" width="20.34" height="5.7" fill="#553626"/>
<rect x="787.1" y="531.25" width="20.34" height="5.7" fill="#7a5236"/>
<rect x="908.04" y="531.25" width="20.34" height="5.7" fill="#7a5236"/>
<rect x="807.14" y="531.25" width="5.31" height="5.7" fill="#21110e"/>
<rect x="903.03" y="531.25" width="5.31" height="5.7" fill="#21110e"/>
<rect x="812.15" y="531.25" width="10.32" height="5.7" fill="#3a251c"/>
<rect x="893.01" y="531.25" width="10.32" height="5.7" fill="#3a251c"/>
<rect x="822.17" y="531.25" width="5.31" height="5.7" fill="#21110e"/>
<rect x="888" y="531.25" width="5.31" height="5.7" fill="#21110e"/>
<rect x="827.18" y="531.25" width="5.31" height="5.7" fill="#6b4530"/>
<rect x="882.99" y="531.25" width="5.31" height="5.7" fill="#6b4530"/>
<rect x="757.04" y="536.25" width="5.31" height="5.7" fill="#21110e"/>
<rect x="953.13" y="536.25" width="5.31" height="5.7" fill="#21110e"/>
<rect x="762.05" y="536.25" width="15.33" height="5.7" fill="#553626"/>
<rect x="938.1" y="536.25" width="15.33" height="5.7" fill="#553626"/>
<rect x="777.08" y="536.25" width="25.35" height="5.7" fill="#7a5236"/>
<rect x="913.05" y="536.25" width="25.35" height="5.7" fill="#7a5236"/>
<rect x="802.13" y="536.25" width="5.31" height="5.7" fill="#21110e"/>
<rect x="908.04" y="536.25" width="5.31" height="5.7" fill="#21110e"/>
<rect x="807.14" y="536.25" width="10.32" height="5.7" fill="#553626"/>
<rect x="898.02" y="536.25" width="10.32" height="5.7" fill="#553626"/>
<rect x="817.16" y="536.25" width="5.31" height="5.7" fill="#21110e"/>
<rect x="893.01" y="536.25" width="5.31" height="5.7" fill="#21110e"/>
<rect x="822.17" y="536.25" width="5.31" height="5.7" fill="#6b4530"/>
<rect x="888" y="536.25" width="5.31" height="5.7" fill="#6b4530"/>
<rect x="827.18" y="536.25" width="5.31" height="5.7" fill="#7a5236"/>
<rect x="882.99" y="536.25" width="5.31" height="5.7" fill="#7a5236"/>
<rect x="762.05" y="541.25" width="5.31" height="5.7" fill="#553626"/>
<rect x="948.12" y="541.25" width="5.31" height="5.7" fill="#553626"/>
<rect x="767.06" y="541.25" width="25.35" height="5.7" fill="#7a5236"/>
<rect x="923.07" y="541.25" width="25.35" height="5.7" fill="#7a5236"/>
<rect x="802.13" y="541.25" width="5.31" height="5.7" fill="#21110e"/>
<rect x="908.04" y="541.25" width="5.31" height="5.7" fill="#21110e"/>
<rect x="807.14" y="541.25" width="10.32" height="5.7" fill="#553626"/>
<rect x="898.02" y="541.25" width="10.32" height="5.7" fill="#553626"/>
<rect x="817.16" y="541.25" width="20.34" height="5.7" fill="#7a5236"/>
<rect x="877.98" y="541.25" width="20.34" height="5.7" fill="#7a5236"/>
<rect x="797.12" y="546.25" width="5.31" height="5.7" fill="#21110e"/>
<rect x="913.05" y="546.25" width="5.31" height="5.7" fill="#21110e"/>
<rect x="802.13" y="546.25" width="15.33" height="5.7" fill="#553626"/>
<rect x="898.02" y="546.25" width="15.33" height="5.7" fill="#553626"/>
<rect x="817.16" y="546.25" width="10.32" height="5.7" fill="#7a5236"/>
<rect x="888" y="546.25" width="10.32" height="5.7" fill="#7a5236"/>
<path d="M842.21 146.25H882.34V151.3H842.21ZM832.19 151.25H892.36V156.3H832.19ZM827.18 156.25H897.37V161.3H827.18ZM822.17 161.25H902.38V166.3H822.17ZM797.12 166.25H927.43V171.3H797.12ZM787.1 171.25H937.45V176.3H787.1ZM782.09 176.25H942.46V181.3H782.09ZM777.08 181.25H947.47V186.3H777.08ZM777.08 186.25H947.47V191.3H777.08ZM772.07 191.25H952.48V196.3H772.07ZM762.05 196.25H962.5V201.3H762.05ZM752.03 201.25H972.52V206.3H752.03ZM747.02 206.25H977.53V211.3H747.02ZM742.01 211.25H982.54V216.3H742.01ZM742.01 216.25H982.54V221.3H742.01ZM737 221.25H987.55V226.3H737ZM737 226.25H987.55V231.3H737ZM737 231.25H987.55V236.3H737ZM737 236.25H987.55V241.3H737ZM726.98 241.25H997.57V246.3H726.98ZM721.97 246.25H1002.58V251.3H721.97ZM716.96 251.25H1007.59V256.3H716.96ZM716.96 256.25H1007.59V261.3H716.96ZM711.95 261.25H1012.6V266.3H711.95ZM711.95 266.25H1012.6V271.3H711.95ZM711.95 271.25H1012.6V276.3H711.95ZM711.95 276.25H1012.6V281.3H711.95ZM711.95 281.25H1012.6V286.3H711.95ZM716.96 286.25H1007.59V291.3H716.96ZM716.96 291.25H1007.59V296.3H716.96ZM711.95 296.25H1012.6V301.3H711.95ZM706.94 301.25H1017.61V306.3H706.94ZM706.94 306.25H1017.61V311.3H706.94ZM701.93 311.25H1022.62V316.3H701.93ZM701.93 316.25H1022.62V321.3H701.93ZM701.93 321.25H1022.62V326.3H701.93ZM701.93 326.25H1022.62V331.3H701.93ZM701.93 331.25H1022.62V336.3H701.93ZM706.94 336.25H1017.61V341.3H706.94ZM706.94 341.25H1017.61V346.3H706.94ZM711.95 346.25H1012.6V351.3H711.95ZM711.95 351.25H1012.6V356.3H711.95ZM711.95 356.25H1012.6V361.3H711.95ZM711.95 361.25H1012.6V366.3H711.95ZM706.94 366.25H1017.61V371.3H706.94ZM706.94 371.25H1017.61V376.3H706.94ZM701.93 376.25H1022.62V381.3H701.93ZM701.93 381.25H1022.62V386.3H701.93ZM701.93 386.25H1022.62V391.3H701.93ZM701.93 391.25H1022.62V396.3H701.93ZM701.93 396.25H1022.62V401.3H701.93ZM706.94 401.25H1017.61V406.3H706.94ZM706.94 406.25H1017.61V411.3H706.94ZM706.94 411.25H1017.61V416.3H706.94ZM711.95 416.25H1012.6V421.3H711.95ZM711.95 421.25H1012.6V426.3H711.95ZM716.96 426.25H1007.59V431.3H716.96ZM721.97 431.25H1002.58V436.3H721.97ZM731.99 436.25H992.56V441.3H731.99ZM757.04 441.25H967.51V446.3H757.04ZM762.05 446.25H962.5V451.3H762.05ZM762.05 451.25H962.5V456.3H762.05ZM767.06 456.25H957.49V461.3H767.06ZM772.07 461.25H952.48V466.3H772.07ZM777.08 466.25H802.18V471.3H777.08ZM827.18 466.25H897.37V471.3H827.18ZM922.37 466.25H947.47V471.3H922.37Z" fill="#06290e"/>
<clipPath id="cr"><path d="M842.21 150.85H882.34V156.65H842.21ZM832.19 155.85H892.36V161.65H832.19ZM827.18 160.85H897.37V166.65H827.18ZM822.17 165.85H902.38V171.65H822.17ZM797.12 170.85H927.43V176.65H797.12ZM787.1 175.85H937.45V181.65H787.1ZM782.09 180.85H942.46V186.65H782.09ZM782.09 185.85H942.46V191.65H782.09ZM777.08 190.85H947.47V196.65H777.08ZM772.07 195.85H952.48V201.65H772.07ZM762.05 200.85H962.5V206.65H762.05ZM752.03 205.85H972.52V211.65H752.03ZM747.02 210.85H977.53V216.65H747.02ZM747.02 215.85H977.53V221.65H747.02ZM742.01 220.85H982.54V226.65H742.01ZM742.01 225.85H982.54V231.65H742.01ZM742.01 230.85H982.54V236.65H742.01ZM742.01 235.85H982.54V241.65H742.01ZM737 240.85H987.55V246.65H737ZM726.98 245.85H997.57V251.65H726.98ZM721.97 250.85H1002.58V256.65H721.97ZM721.97 255.85H1002.58V261.65H721.97ZM716.96 260.85H1007.59V266.65H716.96ZM716.96 265.85H1007.59V271.65H716.96ZM716.96 270.85H1007.59V276.65H716.96ZM716.96 275.85H1007.59V281.65H716.96ZM716.96 280.85H1007.59V286.65H716.96ZM721.97 285.85H1002.58V291.65H721.97ZM721.97 290.85H1002.58V296.65H721.97ZM716.96 295.85H1007.59V301.65H716.96ZM711.95 300.85H1012.6V306.65H711.95ZM711.95 305.85H1012.6V311.65H711.95ZM706.94 310.85H1017.61V316.65H706.94ZM706.94 315.85H1017.61V321.65H706.94ZM706.94 320.85H1017.61V326.65H706.94ZM706.94 325.85H1017.61V331.65H706.94ZM706.94 330.85H1017.61V336.65H706.94ZM711.95 335.85H1012.6V341.65H711.95ZM711.95 340.85H1012.6V346.65H711.95ZM716.96 345.85H1007.59V351.65H716.96ZM716.96 350.85H1007.59V356.65H716.96ZM716.96 355.85H1007.59V361.65H716.96ZM716.96 360.85H1007.59V366.65H716.96ZM711.95 365.85H1012.6V371.65H711.95ZM711.95 370.85H1012.6V376.65H711.95ZM706.94 375.85H1017.61V381.65H706.94ZM706.94 380.85H1017.61V386.65H706.94ZM706.94 385.85H1017.61V391.65H706.94ZM706.94 390.85H1017.61V396.65H706.94ZM706.94 395.85H1017.61V401.65H706.94ZM711.95 400.85H1012.6V406.65H711.95ZM711.95 405.85H1012.6V411.65H711.95ZM711.95 410.85H1012.6V416.65H711.95ZM716.96 415.85H1007.59V421.65H716.96ZM716.96 420.85H1007.59V426.65H716.96ZM721.97 425.85H1002.58V431.65H721.97ZM731.99 430.85H992.56V436.65H731.99ZM757.04 435.85H967.51V441.65H757.04ZM762.05 440.85H962.5V446.65H762.05ZM767.06 445.85H957.49V451.65H767.06ZM767.06 450.85H957.49V456.65H767.06ZM772.07 455.85H952.48V461.65H772.07ZM777.08 460.85H947.47V466.65H777.08ZM827.18 465.85H897.37V471.65H827.18ZM898.82 466.25 L898.82 471.25 L888.3 471.25 L888.3 476.75 L875.28 476.75 L875.28 481.25 L868.76 481.25 L868.76 486.25 L863.25 486.25 L863.25 496.25 L858.74 496.25 L858.74 481.25 L853.23 481.25 L853.23 486.25 L848.22 486.25 L848.22 491.75 L842.71 491.75 L842.71 476.75 L833.69 476.75 L833.69 471.25 L828.18 471.25 L828.18 466.25Z"/></clipPath>
<g clip-path="url(#cr)">
<polygon points="686.9,141.25 1037.6,141.25 1037.6,199.05 957.44,199.05 952.43,201.05 943.91,207.55 931.39,212.05 911.85,217.05 908.84,226.05 901.83,233.05 893.31,238.55 876.78,241.05 871.27,245.55 862.25,245.55 862.25,245.55 853.23,245.55 847.72,241.05 831.19,238.55 822.67,233.05 815.66,226.05 812.65,217.05 793.11,212.05 780.59,207.55 772.07,201.05 767.06,199.05 686.9,199.05" fill="#67b94a"/>
<polygon points="686.9,198.25 767.06,198.25 772.07,200.25 780.59,206.75 793.11,211.25 812.65,216.25 815.66,225.25 822.67,232.25 831.19,237.75 847.72,240.25 853.23,244.75 862.25,244.75 862.25,244.75 871.27,244.75 876.78,240.25 893.31,237.75 901.83,232.25 908.84,225.25 911.85,216.25 931.39,211.25 943.91,206.75 952.43,200.25 957.44,198.25 1037.6,198.25 1037.6,289.55 1012.55,289.55 982.49,295.05 977.48,302.05 972.47,312.05 967.46,318.05 957.44,322.05 957.44,325.05 932.39,325.05 932.39,320.05 917.36,320.05 917.36,325.05 897.32,325.05 890.81,332.05 887.3,337.05 877.28,340.05 874.78,345.05 862.25,345.05 862.25,345.05 849.73,345.05 847.22,340.05 837.2,337.05 833.69,332.05 827.18,325.05 807.14,325.05 807.14,320.05 792.11,320.05 792.11,325.05 767.06,325.05 767.06,322.05 757.04,318.05 752.03,312.05 747.02,302.05 742.01,295.05 711.95,289.55 686.9,289.55" fill="#52963a"/>
<polygon points="686.9,288.75 711.95,288.75 742.01,294.25 747.02,301.25 752.03,311.25 757.04,317.25 767.06,321.25 767.06,324.25 792.11,324.25 792.11,319.25 807.14,319.25 807.14,324.25 827.18,324.25 833.69,331.25 837.2,336.25 847.22,339.25 849.73,344.25 862.25,344.25 862.25,344.25 874.78,344.25 877.28,339.25 887.3,336.25 890.81,331.25 897.32,324.25 917.36,324.25 917.36,319.25 932.39,319.25 932.39,324.25 957.44,324.25 957.44,321.25 967.46,317.25 972.47,311.25 977.48,301.25 982.49,294.25 1012.55,288.75 1037.6,288.75 1037.6,360.05 1022.57,360.05 1002.53,360.05 1002.53,365.05 992.51,365.05 992.51,377.05 987.5,377.05 987.5,387.05 982.49,387.05 982.49,392.05 977.48,392.05 977.48,397.05 967.46,397.05 967.46,402.05 942.41,402.05 942.41,407.05 937.4,407.05 937.4,412.05 927.38,412.05 927.38,417.05 902.33,417.05 902.33,412.05 892.31,412.05 892.31,417.05 887.3,417.05 887.3,422.05 877.28,422.05 877.28,427.05 862.25,427.05 862.25,427.05 847.22,427.05 847.22,422.05 837.2,422.05 837.2,417.05 832.19,417.05 832.19,412.05 822.17,412.05 822.17,417.05 797.12,417.05 797.12,412.05 787.1,412.05 787.1,407.05 782.09,407.05 782.09,402.05 757.04,402.05 757.04,397.05 747.02,397.05 747.02,392.05 742.01,392.05 742.01,387.05 737,387.05 737,377.05 731.99,377.05 731.99,365.05 721.97,365.05 721.97,360.05 701.93,360.05 686.9,360.05" fill="#437a30"/>
<polygon points="686.9,359.25 701.93,359.25 721.97,359.25 721.97,364.25 731.99,364.25 731.99,376.25 737,376.25 737,386.25 742.01,386.25 742.01,391.25 747.02,391.25 747.02,396.25 757.04,396.25 757.04,401.25 782.09,401.25 782.09,406.25 787.1,406.25 787.1,411.25 797.12,411.25 797.12,416.25 822.17,416.25 822.17,411.25 832.19,411.25 832.19,416.25 837.2,416.25 837.2,421.25 847.22,421.25 847.22,426.25 862.25,426.25 862.25,426.25 877.28,426.25 877.28,421.25 887.3,421.25 887.3,416.25 892.31,416.25 892.31,411.25 902.33,411.25 902.33,416.25 927.38,416.25 927.38,411.25 937.4,411.25 937.4,406.25 942.41,406.25 942.41,401.25 967.46,401.25 967.46,396.25 977.48,396.25 977.48,391.25 982.49,391.25 982.49,386.25 987.5,386.25 987.5,376.25 992.51,376.25 992.51,364.25 1002.53,364.25 1002.53,359.25 1022.57,359.25 1037.6,359.25 1037.6,511.25 686.9,511.25" fill="#24481c"/>
</g>
<rect x="759" y="248.9" width="10.05" height="2.55" fill="#000" fill-opacity="0.3"/>
<rect x="756.5" y="246.4" width="15.05" height="2.55" fill="#000" fill-opacity="0.3"/>
<rect x="759" y="233.9" width="10.05" height="2.55" fill="#7b1c57"/>
<rect x="756.5" y="236.4" width="15.05" height="7.55" fill="#7b1c57"/>
<rect x="756.5" y="243.9" width="15.05" height="2.55" fill="#7a1c55"/>
<rect x="759" y="246.4" width="10.05" height="2.55" fill="#55204f"/>
<rect x="759" y="236.4" width="2.55" height="2.55" fill="#e8442e"/>
<rect x="766.5" y="236.4" width="2.55" height="2.55" fill="#e8442e"/>
<rect x="759" y="238.9" width="7.55" height="2.55" fill="#e8442e"/>
<rect x="766.5" y="238.9" width="2.55" height="2.55" fill="#fff"/>
<rect x="759" y="241.4" width="10.05" height="2.55" fill="#d03a3a"/>
<rect x="764" y="231.4" width="2.55" height="4.05" fill="#2a1430"/>
<rect x="766.5" y="228.9" width="2.55" height="2.55" fill="#2a1430"/>
<rect x="928" y="254.5" width="10.05" height="2.55" fill="#000" fill-opacity="0.3"/>
<rect x="925.5" y="252" width="15.05" height="2.55" fill="#000" fill-opacity="0.3"/>
<rect x="928" y="239.5" width="10.05" height="2.55" fill="#2f7a5a"/>
<rect x="925.5" y="242" width="15.05" height="7.55" fill="#2f7a5a"/>
<rect x="925.5" y="249.5" width="15.05" height="2.55" fill="#3a8050"/>
<rect x="928" y="252" width="10.05" height="2.55" fill="#2d5a5a"/>
<rect x="935.5" y="242" width="2.55" height="2.55" fill="#d8d858"/>
<rect x="928" y="242" width="2.55" height="2.55" fill="#d8d858"/>
<rect x="930.5" y="244.5" width="7.55" height="2.55" fill="#d8d858"/>
<rect x="928" y="244.5" width="2.55" height="2.55" fill="#fff"/>
<rect x="928" y="247" width="10.05" height="2.55" fill="#6ab03a"/>
<rect x="930.5" y="237" width="2.55" height="4.05" fill="#2a1430"/>
<rect x="928" y="234.5" width="2.55" height="2.55" fill="#2a1430"/>
<rect x="857.6" y="279.3" width="10.05" height="2.55" fill="#000" fill-opacity="0.3"/>
<rect x="855.1" y="276.8" width="15.05" height="2.55" fill="#000" fill-opacity="0.3"/>
<rect x="857.6" y="264.3" width="10.05" height="2.55" fill="#e07a20"/>
<rect x="855.1" y="266.8" width="15.05" height="7.55" fill="#e07a20"/>
<rect x="855.1" y="274.3" width="15.05" height="2.55" fill="#d9681c"/>
<rect x="857.6" y="276.8" width="10.05" height="2.55" fill="#b8501a"/>
<rect x="857.6" y="266.8" width="2.55" height="2.55" fill="#ffd24a"/>
<rect x="865.1" y="266.8" width="2.55" height="2.55" fill="#ffd24a"/>
<rect x="857.6" y="269.3" width="7.55" height="2.55" fill="#ffd24a"/>
<rect x="865.1" y="269.3" width="2.55" height="2.55" fill="#fff"/>
<rect x="857.6" y="271.8" width="10.05" height="2.55" fill="#f0a030"/>
<rect x="862.6" y="261.8" width="2.55" height="4.05" fill="#2a1430"/>
<rect x="865.1" y="259.3" width="2.55" height="2.55" fill="#2a1430"/>
<rect x="792.6" y="299.2" width="10.05" height="2.55" fill="#000" fill-opacity="0.3"/>
<rect x="790.1" y="296.7" width="15.05" height="2.55" fill="#000" fill-opacity="0.3"/>
<rect x="792.6" y="284.2" width="10.05" height="2.55" fill="#2f7a5a"/>
<rect x="790.1" y="286.7" width="15.05" height="7.55" fill="#2f7a5a"/>
<rect x="790.1" y="294.2" width="15.05" height="2.55" fill="#3a8050"/>
<rect x="792.6" y="296.7" width="10.05" height="2.55" fill="#2d5a5a"/>
<rect x="792.6" y="286.7" width="2.55" height="2.55" fill="#d8d858"/>
<rect x="800.1" y="286.7" width="2.55" height="2.55" fill="#d8d858"/>
<rect x="792.6" y="289.2" width="7.55" height="2.55" fill="#d8d858"/>
<rect x="800.1" y="289.2" width="2.55" height="2.55" fill="#fff"/>
<rect x="792.6" y="291.7" width="10.05" height="2.55" fill="#6ab03a"/>
<rect x="797.6" y="281.7" width="2.55" height="4.05" fill="#2a1430"/>
<rect x="800.1" y="279.2" width="2.55" height="2.55" fill="#2a1430"/>
<rect x="977.5" y="288.6" width="10.05" height="2.55" fill="#000" fill-opacity="0.3"/>
<rect x="975" y="286.1" width="15.05" height="2.55" fill="#000" fill-opacity="0.3"/>
<rect x="977.5" y="273.6" width="10.05" height="2.55" fill="#7b1c57"/>
<rect x="975" y="276.1" width="15.05" height="7.55" fill="#7b1c57"/>
<rect x="975" y="283.6" width="15.05" height="2.55" fill="#7a1c55"/>
<rect x="977.5" y="286.1" width="10.05" height="2.55" fill="#55204f"/>
<rect x="977.5" y="276.1" width="2.55" height="2.55" fill="#e8442e"/>
<rect x="985" y="276.1" width="2.55" height="2.55" fill="#e8442e"/>
<rect x="977.5" y="278.6" width="7.55" height="2.55" fill="#e8442e"/>
<rect x="985" y="278.6" width="2.55" height="2.55" fill="#fff"/>
<rect x="977.5" y="281.1" width="10.05" height="2.55" fill="#d03a3a"/>
<rect x="982.5" y="271.1" width="2.55" height="4.05" fill="#2a1430"/>
<rect x="985" y="268.6" width="2.55" height="2.55" fill="#2a1430"/>
<rect x="897.9" y="313.7" width="10.05" height="2.55" fill="#000" fill-opacity="0.3"/>
<rect x="895.4" y="311.2" width="15.05" height="2.55" fill="#000" fill-opacity="0.3"/>
<rect x="897.9" y="298.7" width="10.05" height="2.55" fill="#e07a20"/>
<rect x="895.4" y="301.2" width="15.05" height="7.55" fill="#e07a20"/>
<rect x="895.4" y="308.7" width="15.05" height="2.55" fill="#d9681c"/>
<rect x="897.9" y="311.2" width="10.05" height="2.55" fill="#b8501a"/>
<rect x="905.4" y="301.2" width="2.55" height="2.55" fill="#ffd24a"/>
<rect x="897.9" y="301.2" width="2.55" height="2.55" fill="#ffd24a"/>
<rect x="900.4" y="303.7" width="7.55" height="2.55" fill="#ffd24a"/>
<rect x="897.9" y="303.7" width="2.55" height="2.55" fill="#fff"/>
<rect x="897.9" y="306.2" width="10.05" height="2.55" fill="#f0a030"/>
<rect x="900.4" y="296.2" width="2.55" height="4.05" fill="#2a1430"/>
<rect x="897.9" y="293.7" width="2.55" height="2.55" fill="#2a1430"/>
<rect x="719.1" y="348.6" width="10.05" height="2.55" fill="#000" fill-opacity="0.3"/>
<rect x="716.6" y="346.1" width="15.05" height="2.55" fill="#000" fill-opacity="0.3"/>
<rect x="719.1" y="333.6" width="10.05" height="2.55" fill="#7b1c57"/>
<rect x="716.6" y="336.1" width="15.05" height="7.55" fill="#7b1c57"/>
<rect x="716.6" y="343.6" width="15.05" height="2.55" fill="#7a1c55"/>
<rect x="719.1" y="346.1" width="10.05" height="2.55" fill="#55204f"/>
<rect x="719.1" y="336.1" width="2.55" height="2.55" fill="#e8442e"/>
<rect x="726.6" y="336.1" width="2.55" height="2.55" fill="#e8442e"/>
<rect x="719.1" y="338.6" width="7.55" height="2.55" fill="#e8442e"/>
<rect x="726.6" y="338.6" width="2.55" height="2.55" fill="#fff"/>
<rect x="719.1" y="341.1" width="10.05" height="2.55" fill="#d03a3a"/>
<rect x="724.1" y="331.1" width="2.55" height="4.05" fill="#2a1430"/>
<rect x="726.6" y="328.6" width="2.55" height="2.55" fill="#2a1430"/>
<rect x="761.8" y="364" width="10.05" height="2.55" fill="#000" fill-opacity="0.3"/>
<rect x="759.3" y="361.5" width="15.05" height="2.55" fill="#000" fill-opacity="0.3"/>
<rect x="761.8" y="349" width="10.05" height="2.55" fill="#2f7a5a"/>
<rect x="759.3" y="351.5" width="15.05" height="7.55" fill="#2f7a5a"/>
<rect x="759.3" y="359" width="15.05" height="2.55" fill="#3a8050"/>
<rect x="761.8" y="361.5" width="10.05" height="2.55" fill="#2d5a5a"/>
<rect x="761.8" y="351.5" width="2.55" height="2.55" fill="#d8d858"/>
<rect x="769.3" y="351.5" width="2.55" height="2.55" fill="#d8d858"/>
<rect x="761.8" y="354" width="7.55" height="2.55" fill="#d8d858"/>
<rect x="769.3" y="354" width="2.55" height="2.55" fill="#fff"/>
<rect x="761.8" y="356.5" width="10.05" height="2.55" fill="#6ab03a"/>
<rect x="766.8" y="346.5" width="2.55" height="4.05" fill="#2a1430"/>
<rect x="769.3" y="344" width="2.55" height="2.55" fill="#2a1430"/>
<rect x="972.7" y="356.2" width="10.05" height="2.55" fill="#000" fill-opacity="0.3"/>
<rect x="970.2" y="353.7" width="15.05" height="2.55" fill="#000" fill-opacity="0.3"/>
<rect x="972.7" y="341.2" width="10.05" height="2.55" fill="#7b1c57"/>
<rect x="970.2" y="343.7" width="15.05" height="7.55" fill="#7b1c57"/>
<rect x="970.2" y="351.2" width="15.05" height="2.55" fill="#7a1c55"/>
<rect x="972.7" y="353.7" width="10.05" height="2.55" fill="#55204f"/>
<rect x="972.7" y="343.7" width="2.55" height="2.55" fill="#e8442e"/>
<rect x="980.2" y="343.7" width="2.55" height="2.55" fill="#e8442e"/>
<rect x="972.7" y="346.2" width="7.55" height="2.55" fill="#e8442e"/>
<rect x="980.2" y="346.2" width="2.55" height="2.55" fill="#fff"/>
<rect x="972.7" y="348.7" width="10.05" height="2.55" fill="#d03a3a"/>
<rect x="977.7" y="338.7" width="2.55" height="4.05" fill="#2a1430"/>
<rect x="980.2" y="336.2" width="2.55" height="2.55" fill="#2a1430"/>
<rect x="857.6" y="372.4" width="10.05" height="2.55" fill="#000" fill-opacity="0.3"/>
<rect x="855.1" y="369.9" width="15.05" height="2.55" fill="#000" fill-opacity="0.3"/>
<rect x="857.6" y="357.4" width="10.05" height="2.55" fill="#e07a20"/>
<rect x="855.1" y="359.9" width="15.05" height="7.55" fill="#e07a20"/>
<rect x="855.1" y="367.4" width="15.05" height="2.55" fill="#d9681c"/>
<rect x="857.6" y="369.9" width="10.05" height="2.55" fill="#b8501a"/>
<rect x="865.1" y="359.9" width="2.55" height="2.55" fill="#ffd24a"/>
<rect x="857.6" y="359.9" width="2.55" height="2.55" fill="#ffd24a"/>
<rect x="860.1" y="362.4" width="7.55" height="2.55" fill="#ffd24a"/>
<rect x="857.6" y="362.4" width="2.55" height="2.55" fill="#fff"/>
<rect x="857.6" y="364.9" width="10.05" height="2.55" fill="#f0a030"/>
<rect x="860.1" y="354.9" width="2.55" height="4.05" fill="#2a1430"/>
<rect x="857.6" y="352.4" width="2.55" height="2.55" fill="#2a1430"/>
<rect x="907.6" y="387.3" width="10.05" height="2.55" fill="#000" fill-opacity="0.3"/>
<rect x="905.1" y="384.8" width="15.05" height="2.55" fill="#000" fill-opacity="0.3"/>
<rect x="907.6" y="372.3" width="10.05" height="2.55" fill="#2f7a5a"/>
<rect x="905.1" y="374.8" width="15.05" height="7.55" fill="#2f7a5a"/>
<rect x="905.1" y="382.3" width="15.05" height="2.55" fill="#3a8050"/>
<rect x="907.6" y="384.8" width="10.05" height="2.55" fill="#2d5a5a"/>
<rect x="915.1" y="374.8" width="2.55" height="2.55" fill="#d8d858"/>
<rect x="907.6" y="374.8" width="2.55" height="2.55" fill="#d8d858"/>
<rect x="910.1" y="377.3" width="7.55" height="2.55" fill="#d8d858"/>
<rect x="907.6" y="377.3" width="2.55" height="2.55" fill="#fff"/>
<rect x="907.6" y="379.8" width="10.05" height="2.55" fill="#6ab03a"/>
<rect x="910.1" y="369.8" width="2.55" height="4.05" fill="#2a1430"/>
<rect x="907.6" y="367.3" width="2.55" height="2.55" fill="#2a1430"/>
<rect x="807.9" y="397.1" width="10.05" height="2.55" fill="#000" fill-opacity="0.3"/>
<rect x="805.4" y="394.6" width="15.05" height="2.55" fill="#000" fill-opacity="0.3"/>
<rect x="807.9" y="382.1" width="10.05" height="2.55" fill="#7b1c57"/>
<rect x="805.4" y="384.6" width="15.05" height="7.55" fill="#7b1c57"/>
<rect x="805.4" y="392.1" width="15.05" height="2.55" fill="#7a1c55"/>
<rect x="807.9" y="394.6" width="10.05" height="2.55" fill="#55204f"/>
<rect x="815.4" y="384.6" width="2.55" height="2.55" fill="#e8442e"/>
<rect x="807.9" y="384.6" width="2.55" height="2.55" fill="#e8442e"/>
<rect x="810.4" y="387.1" width="7.55" height="2.55" fill="#e8442e"/>
<rect x="807.9" y="387.1" width="2.55" height="2.55" fill="#fff"/>
<rect x="807.9" y="389.6" width="10.05" height="2.55" fill="#d03a3a"/>
<rect x="810.4" y="379.6" width="2.55" height="4.05" fill="#2a1430"/>
<rect x="807.9" y="377.1" width="2.55" height="2.55" fill="#2a1430"/>
<rect x="719.1" y="404" width="10.05" height="2.55" fill="#000" fill-opacity="0.3"/>
<rect x="716.6" y="401.5" width="15.05" height="2.55" fill="#000" fill-opacity="0.3"/>
<rect x="719.1" y="389" width="10.05" height="2.55" fill="#7b1c57"/>
<rect x="716.6" y="391.5" width="15.05" height="7.55" fill="#7b1c57"/>
<rect x="716.6" y="399" width="15.05" height="2.55" fill="#7a1c55"/>
<rect x="719.1" y="401.5" width="10.05" height="2.55" fill="#55204f"/>
<rect x="726.6" y="391.5" width="2.55" height="2.55" fill="#e8442e"/>
<rect x="719.1" y="391.5" width="2.55" height="2.55" fill="#e8442e"/>
<rect x="721.6" y="394" width="7.55" height="2.55" fill="#e8442e"/>
<rect x="719.1" y="394" width="2.55" height="2.55" fill="#fff"/>
<rect x="719.1" y="396.5" width="10.05" height="2.55" fill="#d03a3a"/>
<rect x="721.6" y="386.5" width="2.55" height="4.05" fill="#2a1430"/>
<rect x="719.1" y="384" width="2.55" height="2.55" fill="#2a1430"/>
<rect x="992.8" y="408.8" width="10.05" height="2.55" fill="#000" fill-opacity="0.3"/>
<rect x="990.3" y="406.3" width="15.05" height="2.55" fill="#000" fill-opacity="0.3"/>
<rect x="992.8" y="393.8" width="10.05" height="2.55" fill="#e07a20"/>
<rect x="990.3" y="396.3" width="15.05" height="7.55" fill="#e07a20"/>
<rect x="990.3" y="403.8" width="15.05" height="2.55" fill="#d9681c"/>
<rect x="992.8" y="406.3" width="10.05" height="2.55" fill="#b8501a"/>
<rect x="1000.3" y="396.3" width="2.55" height="2.55" fill="#ffd24a"/>
<rect x="992.8" y="396.3" width="2.55" height="2.55" fill="#ffd24a"/>
<rect x="995.3" y="398.8" width="7.55" height="2.55" fill="#ffd24a"/>
<rect x="992.8" y="398.8" width="2.55" height="2.55" fill="#fff"/>
<rect x="992.8" y="401.3" width="10.05" height="2.55" fill="#f0a030"/>
<rect x="995.3" y="391.3" width="2.55" height="4.05" fill="#2a1430"/>
<rect x="992.8" y="388.8" width="2.55" height="2.55" fill="#2a1430"/>
<rect x="787.8" y="448.7" width="10.05" height="2.55" fill="#000" fill-opacity="0.3"/>
<rect x="785.3" y="446.2" width="15.05" height="2.55" fill="#000" fill-opacity="0.3"/>
<rect x="787.8" y="433.7" width="10.05" height="2.55" fill="#2f7a5a"/>
<rect x="785.3" y="436.2" width="15.05" height="7.55" fill="#2f7a5a"/>
<rect x="785.3" y="443.7" width="15.05" height="2.55" fill="#3a8050"/>
<rect x="787.8" y="446.2" width="10.05" height="2.55" fill="#2d5a5a"/>
<rect x="795.3" y="436.2" width="2.55" height="2.55" fill="#d8d858"/>
<rect x="787.8" y="436.2" width="2.55" height="2.55" fill="#d8d858"/>
<rect x="790.3" y="438.7" width="7.55" height="2.55" fill="#d8d858"/>
<rect x="787.8" y="438.7" width="2.55" height="2.55" fill="#fff"/>
<rect x="787.8" y="441.2" width="10.05" height="2.55" fill="#6ab03a"/>
<rect x="790.3" y="431.2" width="2.55" height="4.05" fill="#2a1430"/>
<rect x="787.8" y="428.7" width="2.55" height="2.55" fill="#2a1430"/>
<rect x="912.7" y="448.7" width="10.05" height="2.55" fill="#000" fill-opacity="0.3"/>
<rect x="910.2" y="446.2" width="15.05" height="2.55" fill="#000" fill-opacity="0.3"/>
<rect x="912.7" y="433.7" width="10.05" height="2.55" fill="#7b1c57"/>
<rect x="910.2" y="436.2" width="15.05" height="7.55" fill="#7b1c57"/>
<rect x="910.2" y="443.7" width="15.05" height="2.55" fill="#7a1c55"/>
<rect x="912.7" y="446.2" width="10.05" height="2.55" fill="#55204f"/>
<rect x="912.7" y="436.2" width="2.55" height="2.55" fill="#e8442e"/>
<rect x="920.2" y="436.2" width="2.55" height="2.55" fill="#e8442e"/>
<rect x="912.7" y="438.7" width="7.55" height="2.55" fill="#e8442e"/>
<rect x="920.2" y="438.7" width="2.55" height="2.55" fill="#fff"/>
<rect x="912.7" y="441.2" width="10.05" height="2.55" fill="#d03a3a"/>
<rect x="917.7" y="431.2" width="2.55" height="4.05" fill="#2a1430"/>
<rect x="920.2" y="428.7" width="2.55" height="2.55" fill="#2a1430"/>
<rect x="797.9" y="228.1" width="5" height="2.5" fill="#3e8030"/>
<rect x="795.4" y="230.6" width="10" height="2.5" fill="#2f6a24"/>
<rect x="797.9" y="230.6" width="5" height="2.5" fill="#3e8030"/>
<rect x="795.4" y="233.1" width="10" height="5" fill="#4a2f22"/>
<rect x="797.9" y="233.1" width="5" height="5" fill="#6b4530"/>
<rect x="797.9" y="238.1" width="5" height="2.5" fill="#4a2f22"/>
<rect x="795.4" y="238.1" width="2.5" height="2.5" fill="#000" fill-opacity="0.28"/>
<rect x="802.9" y="238.1" width="2.5" height="2.5" fill="#000" fill-opacity="0.28"/>
<rect x="797.9" y="240.6" width="5" height="2.5" fill="#000" fill-opacity="0.28"/>
<rect x="957.9" y="218.3" width="5" height="2.5" fill="#3e8030"/>
<rect x="955.4" y="220.8" width="10" height="2.5" fill="#2f6a24"/>
<rect x="957.9" y="220.8" width="5" height="2.5" fill="#3e8030"/>
<rect x="955.4" y="223.3" width="10" height="5" fill="#4a2f22"/>
<rect x="957.9" y="223.3" width="5" height="5" fill="#6b4530"/>
<rect x="957.9" y="228.3" width="5" height="2.5" fill="#4a2f22"/>
<rect x="955.4" y="228.3" width="2.5" height="2.5" fill="#000" fill-opacity="0.28"/>
<rect x="962.9" y="228.3" width="2.5" height="2.5" fill="#000" fill-opacity="0.28"/>
<rect x="957.9" y="230.8" width="5" height="2.5" fill="#000" fill-opacity="0.28"/>
<rect x="842.5" y="251" width="5" height="2.5" fill="#3e8030"/>
<rect x="840" y="253.5" width="10" height="2.5" fill="#2f6a24"/>
<rect x="842.5" y="253.5" width="5" height="2.5" fill="#3e8030"/>
<rect x="840" y="256" width="10" height="5" fill="#4a2f22"/>
<rect x="842.5" y="256" width="5" height="5" fill="#6b4530"/>
<rect x="842.5" y="261" width="5" height="2.5" fill="#4a2f22"/>
<rect x="840" y="261" width="2.5" height="2.5" fill="#000" fill-opacity="0.28"/>
<rect x="847.5" y="261" width="2.5" height="2.5" fill="#000" fill-opacity="0.28"/>
<rect x="842.5" y="263.5" width="5" height="2.5" fill="#000" fill-opacity="0.28"/>
<rect x="822.4" y="276.1" width="5" height="2.5" fill="#3e8030"/>
<rect x="819.9" y="278.6" width="10" height="2.5" fill="#2f6a24"/>
<rect x="822.4" y="278.6" width="5" height="2.5" fill="#3e8030"/>
<rect x="819.9" y="281.1" width="10" height="5" fill="#4a2f22"/>
<rect x="822.4" y="281.1" width="5" height="5" fill="#6b4530"/>
<rect x="822.4" y="286.1" width="5" height="2.5" fill="#4a2f22"/>
<rect x="819.9" y="286.1" width="2.5" height="2.5" fill="#000" fill-opacity="0.28"/>
<rect x="827.4" y="286.1" width="2.5" height="2.5" fill="#000" fill-opacity="0.28"/>
<rect x="822.4" y="288.6" width="5" height="2.5" fill="#000" fill-opacity="0.28"/>
<rect x="756.5" y="286.1" width="5" height="2.5" fill="#3e8030"/>
<rect x="754" y="288.6" width="10" height="2.5" fill="#2f6a24"/>
<rect x="756.5" y="288.6" width="5" height="2.5" fill="#3e8030"/>
<rect x="754" y="291.1" width="10" height="5" fill="#4a2f22"/>
<rect x="756.5" y="291.1" width="5" height="5" fill="#6b4530"/>
<rect x="756.5" y="296.1" width="5" height="2.5" fill="#4a2f22"/>
<rect x="754" y="296.1" width="2.5" height="2.5" fill="#000" fill-opacity="0.28"/>
<rect x="761.5" y="296.1" width="2.5" height="2.5" fill="#000" fill-opacity="0.28"/>
<rect x="756.5" y="298.6" width="5" height="2.5" fill="#000" fill-opacity="0.28"/>
<rect x="922.7" y="276.1" width="5" height="2.5" fill="#3e8030"/>
<rect x="920.2" y="278.6" width="10" height="2.5" fill="#2f6a24"/>
<rect x="922.7" y="278.6" width="5" height="2.5" fill="#3e8030"/>
<rect x="920.2" y="281.1" width="10" height="5" fill="#4a2f22"/>
<rect x="922.7" y="281.1" width="5" height="5" fill="#6b4530"/>
<rect x="922.7" y="286.1" width="5" height="2.5" fill="#4a2f22"/>
<rect x="920.2" y="286.1" width="2.5" height="2.5" fill="#000" fill-opacity="0.28"/>
<rect x="927.7" y="286.1" width="2.5" height="2.5" fill="#000" fill-opacity="0.28"/>
<rect x="922.7" y="288.6" width="5" height="2.5" fill="#000" fill-opacity="0.28"/>
<rect x="952.6" y="270.5" width="5" height="2.5" fill="#3e8030"/>
<rect x="950.1" y="273" width="10" height="2.5" fill="#2f6a24"/>
<rect x="952.6" y="273" width="5" height="2.5" fill="#3e8030"/>
<rect x="950.1" y="275.5" width="10" height="5" fill="#4a2f22"/>
<rect x="952.6" y="275.5" width="5" height="5" fill="#6b4530"/>
<rect x="952.6" y="280.5" width="5" height="2.5" fill="#4a2f22"/>
<rect x="950.1" y="280.5" width="2.5" height="2.5" fill="#000" fill-opacity="0.28"/>
<rect x="957.6" y="280.5" width="2.5" height="2.5" fill="#000" fill-opacity="0.28"/>
<rect x="952.6" y="283" width="5" height="2.5" fill="#000" fill-opacity="0.28"/>
<rect x="842.5" y="310.8" width="5" height="2.5" fill="#3e8030"/>
<rect x="840" y="313.3" width="10" height="2.5" fill="#2f6a24"/>
<rect x="842.5" y="313.3" width="5" height="2.5" fill="#3e8030"/>
<rect x="840" y="315.8" width="10" height="5" fill="#4a2f22"/>
<rect x="842.5" y="315.8" width="5" height="5" fill="#6b4530"/>
<rect x="842.5" y="320.8" width="5" height="2.5" fill="#4a2f22"/>
<rect x="840" y="320.8" width="2.5" height="2.5" fill="#000" fill-opacity="0.28"/>
<rect x="847.5" y="320.8" width="2.5" height="2.5" fill="#000" fill-opacity="0.28"/>
<rect x="842.5" y="323.3" width="5" height="2.5" fill="#000" fill-opacity="0.28"/>
<rect x="867.7" y="310.8" width="5" height="2.5" fill="#3e8030"/>
<rect x="865.2" y="313.3" width="10" height="2.5" fill="#2f6a24"/>
<rect x="867.7" y="313.3" width="5" height="2.5" fill="#3e8030"/>
<rect x="865.2" y="315.8" width="10" height="5" fill="#4a2f22"/>
<rect x="867.7" y="315.8" width="5" height="5" fill="#6b4530"/>
<rect x="867.7" y="320.8" width="5" height="2.5" fill="#4a2f22"/>
<rect x="865.2" y="320.8" width="2.5" height="2.5" fill="#000" fill-opacity="0.28"/>
<rect x="872.7" y="320.8" width="2.5" height="2.5" fill="#000" fill-opacity="0.28"/>
<rect x="867.7" y="323.3" width="5" height="2.5" fill="#000" fill-opacity="0.28"/>
<rect x="795.1" y="344" width="5" height="2.5" fill="#3e8030"/>
<rect x="792.6" y="346.5" width="10" height="2.5" fill="#2f6a24"/>
<rect x="795.1" y="346.5" width="5" height="2.5" fill="#3e8030"/>
<rect x="792.6" y="349" width="10" height="5" fill="#4a2f22"/>
<rect x="795.1" y="349" width="5" height="5" fill="#6b4530"/>
<rect x="795.1" y="354" width="5" height="2.5" fill="#4a2f22"/>
<rect x="792.6" y="354" width="2.5" height="2.5" fill="#000" fill-opacity="0.28"/>
<rect x="800.1" y="354" width="2.5" height="2.5" fill="#000" fill-opacity="0.28"/>
<rect x="795.1" y="356.5" width="5" height="2.5" fill="#000" fill-opacity="0.28"/>
<rect x="930.5" y="344" width="5" height="2.5" fill="#3e8030"/>
<rect x="928" y="346.5" width="10" height="2.5" fill="#2f6a24"/>
<rect x="930.5" y="346.5" width="5" height="2.5" fill="#3e8030"/>
<rect x="928" y="349" width="10" height="5" fill="#4a2f22"/>
<rect x="930.5" y="349" width="5" height="5" fill="#6b4530"/>
<rect x="930.5" y="354" width="5" height="2.5" fill="#4a2f22"/>
<rect x="928" y="354" width="2.5" height="2.5" fill="#000" fill-opacity="0.28"/>
<rect x="935.5" y="354" width="2.5" height="2.5" fill="#000" fill-opacity="0.28"/>
<rect x="930.5" y="356.5" width="5" height="2.5" fill="#000" fill-opacity="0.28"/>
<rect x="785.3" y="383.5" width="5" height="2.5" fill="#3e8030"/>
<rect x="782.8" y="386" width="10" height="2.5" fill="#2f6a24"/>
<rect x="785.3" y="386" width="5" height="2.5" fill="#3e8030"/>
<rect x="782.8" y="388.5" width="10" height="5" fill="#4a2f22"/>
<rect x="785.3" y="388.5" width="5" height="5" fill="#6b4530"/>
<rect x="785.3" y="393.5" width="5" height="2.5" fill="#4a2f22"/>
<rect x="782.8" y="393.5" width="2.5" height="2.5" fill="#000" fill-opacity="0.28"/>
<rect x="790.3" y="393.5" width="2.5" height="2.5" fill="#000" fill-opacity="0.28"/>
<rect x="785.3" y="396" width="5" height="2.5" fill="#000" fill-opacity="0.28"/>
<rect x="825.2" y="393.8" width="5" height="2.5" fill="#3e8030"/>
<rect x="822.7" y="396.3" width="10" height="2.5" fill="#2f6a24"/>
<rect x="825.2" y="396.3" width="5" height="2.5" fill="#3e8030"/>
<rect x="822.7" y="398.8" width="10" height="5" fill="#4a2f22"/>
<rect x="825.2" y="398.8" width="5" height="5" fill="#6b4530"/>
<rect x="825.2" y="403.8" width="5" height="2.5" fill="#4a2f22"/>
<rect x="822.7" y="403.8" width="2.5" height="2.5" fill="#000" fill-opacity="0.28"/>
<rect x="830.2" y="403.8" width="2.5" height="2.5" fill="#000" fill-opacity="0.28"/>
<rect x="825.2" y="406.3" width="5" height="2.5" fill="#000" fill-opacity="0.28"/>
<rect x="890" y="393.8" width="5" height="2.5" fill="#3e8030"/>
<rect x="887.5" y="396.3" width="10" height="2.5" fill="#2f6a24"/>
<rect x="890" y="396.3" width="5" height="2.5" fill="#3e8030"/>
<rect x="887.5" y="398.8" width="10" height="5" fill="#4a2f22"/>
<rect x="890" y="398.8" width="5" height="5" fill="#6b4530"/>
<rect x="890" y="403.8" width="5" height="2.5" fill="#4a2f22"/>
<rect x="887.5" y="403.8" width="2.5" height="2.5" fill="#000" fill-opacity="0.28"/>
<rect x="895" y="403.8" width="2.5" height="2.5" fill="#000" fill-opacity="0.28"/>
<rect x="890" y="406.3" width="5" height="2.5" fill="#000" fill-opacity="0.28"/>
<rect x="865.5" y="406.4" width="5" height="2.5" fill="#3e8030"/>
<rect x="863" y="408.9" width="10" height="2.5" fill="#2f6a24"/>
<rect x="865.5" y="408.9" width="5" height="2.5" fill="#3e8030"/>
<rect x="863" y="411.4" width="10" height="5" fill="#4a2f22"/>
<rect x="865.5" y="411.4" width="5" height="5" fill="#6b4530"/>
<rect x="865.5" y="416.4" width="5" height="2.5" fill="#4a2f22"/>
<rect x="863" y="416.4" width="2.5" height="2.5" fill="#000" fill-opacity="0.28"/>
<rect x="870.5" y="416.4" width="2.5" height="2.5" fill="#000" fill-opacity="0.28"/>
<rect x="865.5" y="418.9" width="5" height="2.5" fill="#000" fill-opacity="0.28"/>
<rect x="744.2" y="408.4" width="5" height="2.5" fill="#3e8030"/>
<rect x="741.7" y="410.9" width="10" height="2.5" fill="#2f6a24"/>
<rect x="744.2" y="410.9" width="5" height="2.5" fill="#3e8030"/>
<rect x="741.7" y="413.4" width="10" height="5" fill="#4a2f22"/>
<rect x="744.2" y="413.4" width="5" height="5" fill="#6b4530"/>
<rect x="744.2" y="418.4" width="5" height="2.5" fill="#4a2f22"/>
<rect x="741.7" y="418.4" width="2.5" height="2.5" fill="#000" fill-opacity="0.28"/>
<rect x="749.2" y="418.4" width="2.5" height="2.5" fill="#000" fill-opacity="0.28"/>
<rect x="744.2" y="420.9" width="5" height="2.5" fill="#000" fill-opacity="0.28"/>
<rect x="967.7" y="400.8" width="5" height="2.5" fill="#3e8030"/>
<rect x="965.2" y="403.3" width="10" height="2.5" fill="#2f6a24"/>
<rect x="967.7" y="403.3" width="5" height="2.5" fill="#3e8030"/>
<rect x="965.2" y="405.8" width="10" height="5" fill="#4a2f22"/>
<rect x="967.7" y="405.8" width="5" height="5" fill="#6b4530"/>
<rect x="967.7" y="410.8" width="5" height="2.5" fill="#4a2f22"/>
<rect x="965.2" y="410.8" width="2.5" height="2.5" fill="#000" fill-opacity="0.28"/>
<rect x="972.7" y="410.8" width="2.5" height="2.5" fill="#000" fill-opacity="0.28"/>
<rect x="967.7" y="413.3" width="5" height="2.5" fill="#000" fill-opacity="0.28"/>
<rect x="995.3" y="413.4" width="5" height="2.5" fill="#3e8030"/>
<rect x="992.8" y="415.9" width="10" height="2.5" fill="#2f6a24"/>
<rect x="995.3" y="415.9" width="5" height="2.5" fill="#3e8030"/>
<rect x="992.8" y="418.4" width="10" height="5" fill="#4a2f22"/>
<rect x="995.3" y="418.4" width="5" height="5" fill="#6b4530"/>
<rect x="995.3" y="423.4" width="5" height="2.5" fill="#4a2f22"/>
<rect x="992.8" y="423.4" width="2.5" height="2.5" fill="#000" fill-opacity="0.28"/>
<rect x="1000.3" y="423.4" width="2.5" height="2.5" fill="#000" fill-opacity="0.28"/>
<rect x="995.3" y="425.9" width="5" height="2.5" fill="#000" fill-opacity="0.28"/>
<rect x="764.3" y="438" width="5" height="2.5" fill="#3e8030"/>
<rect x="761.8" y="440.5" width="10" height="2.5" fill="#2f6a24"/>
<rect x="764.3" y="440.5" width="5" height="2.5" fill="#3e8030"/>
<rect x="761.8" y="443" width="10" height="5" fill="#4a2f22"/>
<rect x="764.3" y="443" width="5" height="5" fill="#6b4530"/>
<rect x="764.3" y="448" width="5" height="2.5" fill="#4a2f22"/>
<rect x="761.8" y="448" width="2.5" height="2.5" fill="#000" fill-opacity="0.28"/>
<rect x="769.3" y="448" width="2.5" height="2.5" fill="#000" fill-opacity="0.28"/>
<rect x="764.3" y="450.5" width="5" height="2.5" fill="#000" fill-opacity="0.28"/>
<rect x="815.2" y="453" width="5" height="2.5" fill="#3e8030"/>
<rect x="812.7" y="455.5" width="10" height="2.5" fill="#2f6a24"/>
<rect x="815.2" y="455.5" width="5" height="2.5" fill="#3e8030"/>
<rect x="812.7" y="458" width="10" height="5" fill="#4a2f22"/>
<rect x="815.2" y="458" width="5" height="5" fill="#6b4530"/>
<rect x="815.2" y="463" width="5" height="2.5" fill="#4a2f22"/>
<rect x="812.7" y="463" width="2.5" height="2.5" fill="#000" fill-opacity="0.28"/>
<rect x="820.2" y="463" width="2.5" height="2.5" fill="#000" fill-opacity="0.28"/>
<rect x="815.2" y="465.5" width="5" height="2.5" fill="#000" fill-opacity="0.28"/>
<rect x="869.9" y="458.6" width="5" height="2.5" fill="#3e8030"/>
<rect x="867.4" y="461.1" width="10" height="2.5" fill="#2f6a24"/>
<rect x="869.9" y="461.1" width="5" height="2.5" fill="#3e8030"/>
<rect x="867.4" y="463.6" width="10" height="5" fill="#4a2f22"/>
<rect x="869.9" y="463.6" width="5" height="5" fill="#6b4530"/>
<rect x="869.9" y="468.6" width="5" height="2.5" fill="#4a2f22"/>
<rect x="867.4" y="468.6" width="2.5" height="2.5" fill="#000" fill-opacity="0.28"/>
<rect x="874.9" y="468.6" width="2.5" height="2.5" fill="#000" fill-opacity="0.28"/>
<rect x="869.9" y="471.1" width="5" height="2.5" fill="#000" fill-opacity="0.28"/>
<rect x="925.2" y="451.1" width="5" height="2.5" fill="#3e8030"/>
<rect x="922.7" y="453.6" width="10" height="2.5" fill="#2f6a24"/>
<rect x="925.2" y="453.6" width="5" height="2.5" fill="#3e8030"/>
<rect x="922.7" y="456.1" width="10" height="5" fill="#4a2f22"/>
<rect x="925.2" y="456.1" width="5" height="5" fill="#6b4530"/>
<rect x="925.2" y="461.1" width="5" height="2.5" fill="#4a2f22"/>
<rect x="922.7" y="461.1" width="2.5" height="2.5" fill="#000" fill-opacity="0.28"/>
<rect x="930.2" y="461.1" width="2.5" height="2.5" fill="#000" fill-opacity="0.28"/>
<rect x="925.2" y="463.6" width="5" height="2.5" fill="#000" fill-opacity="0.28"/>
<path d="M953.4 480.8 H957.7 V486 H990.8 V480.8 H995.1 V501 L990.8 506.1 H957.7 L953.4 501 Z" fill="#21110e"/>
<rect x="957.7" y="486" width="33.1" height="3.5" fill="#3a251c"/>
<rect x="957.7" y="489.5" width="33.1" height="12.5" fill="#7a5236"/>
<rect x="957.7" y="493" width="33.1" height="4" fill="#8a6040"/>
<rect x="629.2" y="176.4" width="7.4" height="2.5" fill="#000"/>
<rect x="634.2" y="171.5" width="2.4" height="7.4" fill="#000"/>
<rect x="639.3" y="176.4" width="7.4" height="2.5" fill="#000"/>
<rect x="639.3" y="171.5" width="2.4" height="7.4" fill="#000"/>
<rect x="629.2" y="181.5" width="7.4" height="2.5" fill="#000"/>
<rect x="634.2" y="181.5" width="2.4" height="7.3" fill="#000"/>
<rect x="639.3" y="181.5" width="7.4" height="2.5" fill="#000"/>
<rect x="639.3" y="181.5" width="2.4" height="7.3" fill="#000"/>
</g>
<rect x="161.5" y="632.4" width="40.4" height="22.6" fill="#000" rx="2"/>
<rect x="163.9" y="634.8" width="35.6" height="17.8" fill="#343434"/>
<rect x="163.9" y="634.8" width="35.6" height="15.6" fill="#686868"/>
<rect x="166.3" y="637.2" width="30.8" height="10.8" fill="#454545"/>
<rect x="201.5" y="632.4" width="40.4" height="22.6" fill="#000" rx="2"/>
<rect x="203.9" y="634.8" width="35.6" height="17.8" fill="#343434"/>
<rect x="203.9" y="634.8" width="35.6" height="15.6" fill="#686868"/>
<rect x="206.3" y="637.2" width="30.8" height="10.8" fill="#454545"/>
<rect x="241.5" y="632.4" width="40.4" height="22.6" fill="#000" rx="2"/>
<rect x="243.9" y="634.8" width="35.6" height="17.8" fill="#343434"/>
<rect x="243.9" y="634.8" width="35.6" height="15.6" fill="#686868"/>
<rect x="246.3" y="637.2" width="30.8" height="10.8" fill="#454545"/>
<rect x="281.5" y="632.4" width="40.4" height="22.6" fill="#000" rx="2"/>
<rect x="283.9" y="634.8" width="35.6" height="17.8" fill="#343434"/>
<rect x="283.9" y="634.8" width="35.6" height="15.6" fill="#686868"/>
<rect x="286.3" y="637.2" width="30.8" height="10.8" fill="#454545"/>
<rect x="321.5" y="632.4" width="39.9" height="22.6" fill="#000" rx="2"/>
<rect x="323.9" y="634.8" width="35.6" height="17.8" fill="#343434"/>
<rect x="323.9" y="634.8" width="35.6" height="15.6" fill="#686868"/>
<rect x="326.3" y="637.2" width="30.8" height="10.8" fill="#454545"/>
<rect x="174.5" y="637.3" width="2.6" height="10.8" fill="#000"/>
<polygon points="185.75,637.1 179.25,642.6 185.75,648.1" fill="#000"/>
<polygon points="220.75,637.1 214.25,642.6 220.75,648.1" fill="#000"/>
<rect x="223.5" y="637.3" width="2.6" height="10.8" fill="#000"/>
<polygon points="258.25,637.1 264.75,642.6 258.25,648.1" fill="#000"/>
<rect x="295" y="637.3" width="2.6" height="10.8" fill="#000"/>
<polygon points="299.75,637.1 306.25,642.6 299.75,648.1" fill="#000"/>
<polygon points="333.75,637.1 340.25,642.6 333.75,648.1" fill="#000"/>
<rect x="342.5" y="637.3" width="2.6" height="10.8" fill="#000"/>
<rect x="162" y="663.4" width="1028" height="122" fill="#484848"/>
<rect x="162" y="663.4" width="1028" height="2.2" fill="#5e5e5e"/>
<rect x="162" y="663.6" width="30" height="30.4" fill="#484848"/>
<rect x="162" y="663.6" width="30" height="2.4" fill="#5e5e5e"/>
<rect x="189.4" y="666" width="2.6" height="28" fill="#333333"/>
<rect x="192" y="663.6" width="30" height="30.4" fill="#484848"/>
<rect x="192" y="663.6" width="30" height="2.4" fill="#5e5e5e"/>
<rect x="219.4" y="666" width="2.6" height="28" fill="#333333"/>
<rect x="222" y="663.6" width="30" height="30.4" fill="#484848"/>
<rect x="222" y="663.6" width="30" height="2.4" fill="#5e5e5e"/>
<rect x="249.4" y="666" width="2.6" height="28" fill="#333333"/>
<rect x="252" y="663.6" width="30" height="30.4" fill="#484848"/>
<rect x="252" y="663.6" width="30" height="2.4" fill="#5e5e5e"/>
<rect x="279.4" y="666" width="2.6" height="28" fill="#333333"/>
<rect x="282" y="663.6" width="30" height="30.4" fill="#484848"/>
<rect x="282" y="663.6" width="30" height="2.4" fill="#5e5e5e"/>
<rect x="309.4" y="666" width="2.6" height="28" fill="#333333"/>
<rect x="312" y="663.6" width="254.6" height="30.4" fill="#484848"/>
<rect x="312" y="663.6" width="254.6" height="2.4" fill="#5e5e5e"/>
<rect x="564" y="666" width="2.6" height="28" fill="#333333"/>
<rect x="564.2" y="663.6" width="2.6" height="30.4" fill="#626262"/>
<rect x="566.6" y="663.6" width="30" height="30.4" fill="#212121"/>
<rect x="566.6" y="663.6" width="30" height="2.4" fill="#5e5e5e"/>
<rect x="594" y="663.6" width="2.6" height="30.4" fill="#333333"/>
<rect x="596.6" y="663.6" width="30" height="30.4" fill="#484848"/>
<rect x="596.6" y="663.6" width="30" height="2.4" fill="#5e5e5e"/>
<rect x="624" y="666" width="2.6" height="28" fill="#333333"/>
<rect x="626.6" y="663.6" width="30" height="30.4" fill="#484848"/>
<rect x="626.6" y="663.6" width="30" height="2.4" fill="#5e5e5e"/>
<rect x="654" y="666" width="2.6" height="28" fill="#333333"/>
<rect x="656.6" y="663.6" width="30" height="30.4" fill="#484848"/>
<rect x="656.6" y="663.6" width="30" height="2.4" fill="#5e5e5e"/>
<rect x="684" y="666" width="2.6" height="28" fill="#333333"/>
<rect x="686.6" y="663.6" width="30" height="30.4" fill="#484848"/>
<rect x="686.6" y="663.6" width="30" height="2.4" fill="#5e5e5e"/>
<rect x="714" y="666" width="2.6" height="28" fill="#333333"/>
<rect x="716.6" y="663.6" width="30" height="30.4" fill="#484848"/>
<rect x="716.6" y="663.6" width="30" height="2.4" fill="#5e5e5e"/>
<rect x="744" y="666" width="2.6" height="28" fill="#333333"/>
<rect x="746.6" y="663.6" width="30" height="30.4" fill="#484848"/>
<rect x="746.6" y="663.6" width="30" height="2.4" fill="#5e5e5e"/>
<rect x="774" y="666" width="2.6" height="28" fill="#333333"/>
<rect x="776.6" y="663.6" width="30" height="30.4" fill="#484848"/>
<rect x="776.6" y="663.6" width="30" height="2.4" fill="#5e5e5e"/>
<rect x="804" y="666" width="2.6" height="28" fill="#333333"/>
<rect x="806.2" y="663.6" width="2.4" height="30.4" fill="#5e5e5e"/>
<rect x="808.6" y="663.6" width="381.4" height="30.4" fill="#484848"/>
<rect x="162" y="694" width="30" height="30" fill="#212121"/>
<rect x="162" y="694" width="30" height="2.4" fill="#5e5e5e"/>
<rect x="189.4" y="694" width="2.6" height="30" fill="#5c5c5c"/>
<rect x="192" y="694" width="30" height="30" fill="#212121"/>
<rect x="192" y="694" width="30" height="2.4" fill="#5e5e5e"/>
<rect x="219.4" y="694" width="2.6" height="30" fill="#5c5c5c"/>
<rect x="222" y="694" width="30" height="30" fill="#212121"/>
<rect x="222" y="694" width="30" height="2.4" fill="#5e5e5e"/>
<rect x="249.4" y="694" width="2.6" height="30" fill="#5c5c5c"/>
<rect x="252" y="694" width="314.6" height="30" fill="#212121"/>
<rect x="252" y="694" width="314.6" height="2.4" fill="#5e5e5e"/>
<rect x="564" y="694" width="2.6" height="30" fill="#333333"/>
<rect x="564.2" y="694" width="2.6" height="30" fill="#626262"/>
<rect x="566.6" y="694" width="30" height="30" fill="#212121"/>
<rect x="566.6" y="694" width="30" height="2.4" fill="#5e5e5e"/>
<rect x="594" y="694" width="2.6" height="30" fill="#5c5c5c"/>
<rect x="596.6" y="694" width="30" height="30" fill="#212121"/>
<rect x="596.6" y="694" width="30" height="2.4" fill="#5e5e5e"/>
<rect x="624" y="694" width="2.6" height="30" fill="#5c5c5c"/>
<rect x="626.6" y="694" width="30" height="30" fill="#212121"/>
<rect x="626.6" y="694" width="30" height="2.4" fill="#5e5e5e"/>
<rect x="654" y="694" width="2.6" height="30" fill="#5c5c5c"/>
<rect x="656.6" y="694" width="30" height="30" fill="#212121"/>
<rect x="656.6" y="694" width="30" height="2.4" fill="#5e5e5e"/>
<rect x="684" y="694" width="2.6" height="30" fill="#5c5c5c"/>
<rect x="686.6" y="694" width="30" height="30" fill="#212121"/>
<rect x="686.6" y="694" width="30" height="2.4" fill="#5e5e5e"/>
<rect x="714" y="694" width="2.6" height="30" fill="#5c5c5c"/>
<rect x="716.6" y="694" width="30" height="30" fill="#212121"/>
<rect x="716.6" y="694" width="30" height="2.4" fill="#5e5e5e"/>
<rect x="744" y="694" width="2.6" height="30" fill="#5c5c5c"/>
<rect x="746.6" y="694" width="30" height="30" fill="#212121"/>
<rect x="746.6" y="694" width="30" height="2.4" fill="#5e5e5e"/>
<rect x="774" y="694" width="2.6" height="30" fill="#5c5c5c"/>
<rect x="776.6" y="694" width="30" height="30" fill="#212121"/>
<rect x="776.6" y="694" width="30" height="2.4" fill="#5e5e5e"/>
<rect x="804" y="694" width="2.6" height="30" fill="#5c5c5c"/>
<rect x="806.2" y="694" width="2.4" height="30" fill="#5e5e5e"/>
<rect x="808.6" y="694" width="381.4" height="30" fill="#484848"/>
<rect x="162" y="724" width="30" height="30.3" fill="#484848"/>
<rect x="162" y="724" width="30" height="2.4" fill="#5e5e5e"/>
<rect x="189.4" y="726.4" width="2.6" height="27.9" fill="#333333"/>
<rect x="192" y="724" width="30" height="30.3" fill="#484848"/>
<rect x="192" y="724" width="30" height="2.4" fill="#5e5e5e"/>
<rect x="219.4" y="726.4" width="2.6" height="27.9" fill="#333333"/>
<rect x="222" y="724" width="30" height="30.3" fill="#484848"/>
<rect x="222" y="724" width="30" height="2.4" fill="#5e5e5e"/>
<rect x="249.4" y="726.4" width="2.6" height="27.9" fill="#333333"/>
<rect x="252" y="724" width="314.6" height="30.3" fill="#484848"/>
<rect x="252" y="724" width="314.6" height="2.4" fill="#5e5e5e"/>
<rect x="564" y="726.4" width="2.6" height="27.9" fill="#333333"/>
<rect x="564.2" y="724" width="2.6" height="30.3" fill="#626262"/>
<rect x="566.6" y="724" width="30" height="30.3" fill="#212121"/>
<rect x="566.6" y="724" width="30" height="2.4" fill="#5e5e5e"/>
<rect x="594" y="724" width="2.6" height="30.3" fill="#333333"/>
<rect x="596.6" y="724" width="30" height="30.3" fill="#484848"/>
<rect x="596.6" y="724" width="30" height="2.4" fill="#5e5e5e"/>
<rect x="624" y="726.4" width="2.6" height="27.9" fill="#333333"/>
<rect x="626.6" y="724" width="30" height="30.3" fill="#484848"/>
<rect x="626.6" y="724" width="30" height="2.4" fill="#5e5e5e"/>
<rect x="654" y="726.4" width="2.6" height="27.9" fill="#333333"/>
<rect x="656.6" y="724" width="30" height="30.3" fill="#484848"/>
<rect x="656.6" y="724" width="30" height="2.4" fill="#5e5e5e"/>
<rect x="684" y="726.4" width="2.6" height="27.9" fill="#333333"/>
<rect x="686.6" y="724" width="30" height="30.3" fill="#484848"/>
<rect x="686.6" y="724" width="30" height="2.4" fill="#5e5e5e"/>
<rect x="714" y="726.4" width="2.6" height="27.9" fill="#333333"/>
<rect x="716.6" y="724" width="30" height="30.3" fill="#484848"/>
<rect x="716.6" y="724" width="30" height="2.4" fill="#5e5e5e"/>
<rect x="744" y="726.4" width="2.6" height="27.9" fill="#333333"/>
<rect x="746.6" y="724" width="30" height="30.3" fill="#484848"/>
<rect x="746.6" y="724" width="30" height="2.4" fill="#5e5e5e"/>
<rect x="774" y="726.4" width="2.6" height="27.9" fill="#333333"/>
<rect x="776.6" y="724" width="30" height="30.3" fill="#484848"/>
<rect x="776.6" y="724" width="30" height="2.4" fill="#5e5e5e"/>
<rect x="804" y="726.4" width="2.6" height="27.9" fill="#333333"/>
<rect x="806.2" y="724" width="2.4" height="30.3" fill="#5e5e5e"/>
<rect x="808.6" y="724" width="381.4" height="30.3" fill="#484848"/>
<rect x="162" y="754.3" width="30" height="31.1" fill="#484848"/>
<rect x="162" y="754.3" width="30" height="2.4" fill="#5e5e5e"/>
<rect x="189.4" y="756.7" width="2.6" height="28.7" fill="#333333"/>
<rect x="192" y="754.3" width="30" height="31.1" fill="#484848"/>
<rect x="192" y="754.3" width="30" height="2.4" fill="#5e5e5e"/>
<rect x="219.4" y="756.7" width="2.6" height="28.7" fill="#333333"/>
<rect x="222" y="754.3" width="30" height="31.1" fill="#484848"/>
<rect x="222" y="754.3" width="30" height="2.4" fill="#5e5e5e"/>
<rect x="249.4" y="756.7" width="2.6" height="28.7" fill="#333333"/>
<rect x="252" y="754.3" width="314.6" height="31.1" fill="#484848"/>
<rect x="252" y="754.3" width="314.6" height="2.4" fill="#5e5e5e"/>
<rect x="564" y="756.7" width="2.6" height="28.7" fill="#333333"/>
<rect x="564.2" y="754.3" width="2.6" height="31.1" fill="#626262"/>
<rect x="566.6" y="754.3" width="30" height="31.1" fill="#212121"/>
<rect x="566.6" y="754.3" width="30" height="2.4" fill="#5e5e5e"/>
<rect x="594" y="754.3" width="2.6" height="31.1" fill="#333333"/>
<rect x="596.6" y="754.3" width="30" height="31.1" fill="#484848"/>
<rect x="596.6" y="754.3" width="30" height="2.4" fill="#5e5e5e"/>
<rect x="624" y="756.7" width="2.6" height="28.7" fill="#333333"/>
<rect x="626.6" y="754.3" width="30" height="31.1" fill="#484848"/>
<rect x="626.6" y="754.3" width="30" height="2.4" fill="#5e5e5e"/>
<rect x="654" y="756.7" width="2.6" height="28.7" fill="#333333"/>
<rect x="656.6" y="754.3" width="30" height="31.1" fill="#484848"/>
<rect x="656.6" y="754.3" width="30" height="2.4" fill="#5e5e5e"/>
<rect x="684" y="756.7" width="2.6" height="28.7" fill="#333333"/>
<rect x="686.6" y="754.3" width="30" height="31.1" fill="#484848"/>
<rect x="686.6" y="754.3" width="30" height="2.4" fill="#5e5e5e"/>
<rect x="714" y="756.7" width="2.6" height="28.7" fill="#333333"/>
<rect x="716.6" y="754.3" width="30" height="31.1" fill="#484848"/>
<rect x="716.6" y="754.3" width="30" height="2.4" fill="#5e5e5e"/>
<rect x="744" y="756.7" width="2.6" height="28.7" fill="#333333"/>
<rect x="746.6" y="754.3" width="30" height="31.1" fill="#484848"/>
<rect x="746.6" y="754.3" width="30" height="2.4" fill="#5e5e5e"/>
<rect x="774" y="756.7" width="2.6" height="28.7" fill="#333333"/>
<rect x="776.6" y="754.3" width="30" height="31.1" fill="#484848"/>
<rect x="776.6" y="754.3" width="30" height="2.4" fill="#5e5e5e"/>
<rect x="804" y="756.7" width="2.6" height="28.7" fill="#333333"/>
<rect x="806.2" y="754.3" width="2.4" height="31.1" fill="#5e5e5e"/>
<rect x="808.6" y="754.3" width="381.4" height="31.1" fill="#484848"/>
<rect x="808.6" y="663.4" width="381.4" height="2.2" fill="#5e5e5e"/>
<rect x="162" y="785.4" width="1028" height="2.2" fill="#1a1a1a"/>
<rect x="159.5" y="696.3" width="2.5" height="27.7" fill="#626262"/>
<ellipse cx="175.5" cy="681.5" rx="9.2" ry="6.2" fill="none" stroke="#000" stroke-width="2.4"/>
<circle cx="175.5" cy="680" r="3.2" fill="#000"/>
<path d="M200 677.5 v-5 a4.2 4.2 0 0 1 8.4 0 v1.5" fill="none" stroke="#000" stroke-width="2.4"/>
<rect x="198" y="677" width="15" height="11" fill="#000"/>
<rect x="204.3" y="680.5" width="2.5" height="4" fill="#484848"/>
<polygon points="229.7,675 234.7,680 229.7,685 224.7,680" fill="#000"/>
<rect x="226" y="676.3" width="7.4" height="7.4" fill="#000"/>
<polygon points="242.3,675 247.3,680 242.3,685 237.3,680" fill="#000"/>
<rect x="238.6" y="676.3" width="7.4" height="7.4" fill="#000"/>
<ellipse cx="175.5" cy="711.7" rx="9.2" ry="6.2" fill="none" stroke="#fff" stroke-width="2.4"/>
<circle cx="175.5" cy="710.2" r="3.2" fill="#fff"/>
<path d="M200 707.7 v-5 a4.2 4.2 0 0 1 8.4 0 v1.5" fill="none" stroke="#fff" stroke-width="2.4"/>
<rect x="198" y="707.2" width="15" height="11" fill="#fff"/>
<rect x="204.3" y="710.7" width="2.5" height="4" fill="#212121"/>
<polygon points="229.7,705.2 234.7,710.2 229.7,715.2 224.7,710.2" fill="#fff"/>
<rect x="226" y="706.5" width="7.4" height="7.4" fill="#fff"/>
<polygon points="242.3,705.2 247.3,710.2 242.3,715.2 237.3,710.2" fill="#fff"/>
<rect x="238.6" y="706.5" width="7.4" height="7.4" fill="#fff"/>
<ellipse cx="175.5" cy="741.85" rx="9.2" ry="6.2" fill="none" stroke="#000" stroke-width="2.4"/>
<circle cx="175.5" cy="740.35" r="3.2" fill="#000"/>
<path d="M200 737.85 v-5 a4.2 4.2 0 0 1 8.4 0 v1.5" fill="none" stroke="#000" stroke-width="2.4"/>
<rect x="198" y="737.35" width="15" height="11" fill="#000"/>
<rect x="204.3" y="740.85" width="2.5" height="4" fill="#484848"/>
<polygon points="229.7,735.35 234.7,740.35 229.7,745.35 224.7,740.35" fill="#000"/>
<rect x="226" y="736.65" width="7.4" height="7.4" fill="#000"/>
<polygon points="242.3,735.35 247.3,740.35 242.3,745.35 237.3,740.35" fill="#000"/>
<rect x="238.6" y="736.65" width="7.4" height="7.4" fill="#000"/>
<ellipse cx="175.5" cy="772.55" rx="9.2" ry="6.2" fill="none" stroke="#000" stroke-width="2.4"/>
<circle cx="175.5" cy="771.05" r="3.2" fill="#000"/>
<path d="M200 768.55 v-5 a4.2 4.2 0 0 1 8.4 0 v1.5" fill="none" stroke="#000" stroke-width="2.4"/>
<rect x="198" y="768.05" width="15" height="11" fill="#000"/>
<rect x="204.3" y="771.55" width="2.5" height="4" fill="#484848"/>
<polygon points="229.7,766.05 234.7,771.05 229.7,776.05 224.7,771.05" fill="#000"/>
<rect x="226" y="767.35" width="7.4" height="7.4" fill="#000"/>
<polygon points="242.3,766.05 247.3,771.05 242.3,776.05 237.3,771.05" fill="#000"/>
<rect x="238.6" y="767.35" width="7.4" height="7.4" fill="#000"/>
<rect x="258" y="671.5" width="16" height="2.4" fill="#8c8c8c"/>
<rect x="268" y="669.1" width="5" height="7.2" fill="#000"/>
<rect x="258" y="678.5" width="16" height="2.4" fill="#8c8c8c"/>
<rect x="261" y="676.1" width="5" height="7.2" fill="#000"/>
<rect x="258" y="685.5" width="16" height="2.4" fill="#8c8c8c"/>
<rect x="266" y="683.1" width="5" height="7.2" fill="#000"/>
<rect x="294" y="676.5" width="12" height="12" fill="none" stroke="#8c8c8c" stroke-width="2.4"/>
<rect x="288.5" y="671.5" width="12" height="12" fill="#484848" stroke="#000" stroke-width="2.4"/>
<text x="258.7" y="715.6" font-size="20" fill="#fff" stroke="#fff" stroke-width="0.55" textLength="143.3" lengthAdjust="spacingAndGlyphs">Swing Shadow</text>
<text x="258.7" y="745.8" font-size="20" fill="#000" stroke="#000" stroke-width="0.3" textLength="55.7" lengthAdjust="spacingAndGlyphs">Swing</text>
<text x="258.7" y="775.5" font-size="20" fill="#000" stroke="#000" stroke-width="0.3" textLength="251" lengthAdjust="spacingAndGlyphs">Fruit and Acorn Shadow</text>
<text x="580.6" y="686" font-size="19" fill="#fff" stroke="#fff" stroke-width="0.55" text-anchor="middle">1</text>
<text x="610.6" y="686" font-size="19" fill="#000" stroke="#000" stroke-width="0.3" text-anchor="middle">2</text>
<text x="640.6" y="686" font-size="19" fill="#000" stroke="#000" stroke-width="0.3" text-anchor="middle">3</text>
<text x="670.6" y="686" font-size="19" fill="#000" stroke="#000" stroke-width="0.3" text-anchor="middle">4</text>
<text x="700.6" y="686" font-size="19" fill="#000" stroke="#000" stroke-width="0.3" text-anchor="middle">5</text>
<text x="730.6" y="686" font-size="19" fill="#000" stroke="#000" stroke-width="0.3" text-anchor="middle">6</text>
<text x="760.6" y="686" font-size="19" fill="#000" stroke="#000" stroke-width="0.3" text-anchor="middle">7</text>
<text x="790.6" y="686" font-size="19" fill="#000" stroke="#000" stroke-width="0.3" text-anchor="middle">8</text>
<rect x="571.4" y="701" width="18.4" height="18.4" fill="#fff" rx="7"/>
<rect x="601.4" y="701" width="18.4" height="18.4" fill="#fff" rx="7"/>
<rect x="631.4" y="701" width="18.4" height="18.4" fill="#fff" rx="7"/>
<rect x="661.4" y="701" width="18.4" height="18.4" fill="#fff" rx="7"/>
<rect x="691.4" y="701" width="18.4" height="18.4" fill="#fff" rx="7"/>
<rect x="721.4" y="701" width="18.4" height="18.4" fill="#fff" rx="7"/>
<rect x="751.4" y="701" width="18.4" height="18.4" fill="#fff" rx="7"/>
<rect x="781.4" y="701" width="18.4" height="18.4" fill="#fff" rx="7"/>
<rect x="571.4" y="731.15" width="18.4" height="18.4" fill="#fff" rx="7"/>
<rect x="601.4" y="731.15" width="18.4" height="18.4" fill="#000" rx="7"/>
<rect x="631.4" y="731.15" width="18.4" height="18.4" fill="#000" rx="7"/>
<rect x="661.4" y="731.15" width="18.4" height="18.4" fill="#000" rx="7"/>
<rect x="691.4" y="731.15" width="18.4" height="18.4" fill="#000" rx="7"/>
<rect x="721.4" y="731.15" width="18.4" height="18.4" fill="#000" rx="7"/>
<rect x="751.4" y="731.15" width="18.4" height="18.4" fill="#000" rx="7"/>
<rect x="781.4" y="731.15" width="18.4" height="18.4" fill="#000" rx="7"/>
<rect x="571.4" y="761.85" width="18.4" height="18.4" fill="#fff" rx="7"/>
<rect x="601.4" y="761.85" width="18.4" height="18.4" fill="#000" rx="7"/>
<rect x="631.4" y="761.85" width="18.4" height="18.4" fill="#000" rx="7"/>
<rect x="661.4" y="761.85" width="18.4" height="18.4" fill="#000" rx="7"/>
<rect x="691.4" y="761.85" width="18.4" height="18.4" fill="#000" rx="7"/>
<rect x="721.4" y="761.85" width="18.4" height="18.4" fill="#000" rx="7"/>
<rect x="751.4" y="761.85" width="18.4" height="18.4" fill="#000" rx="7"/>
<rect x="781.4" y="761.85" width="18.4" height="18.4" fill="#000" rx="7"/>
</svg>
</body></html>
